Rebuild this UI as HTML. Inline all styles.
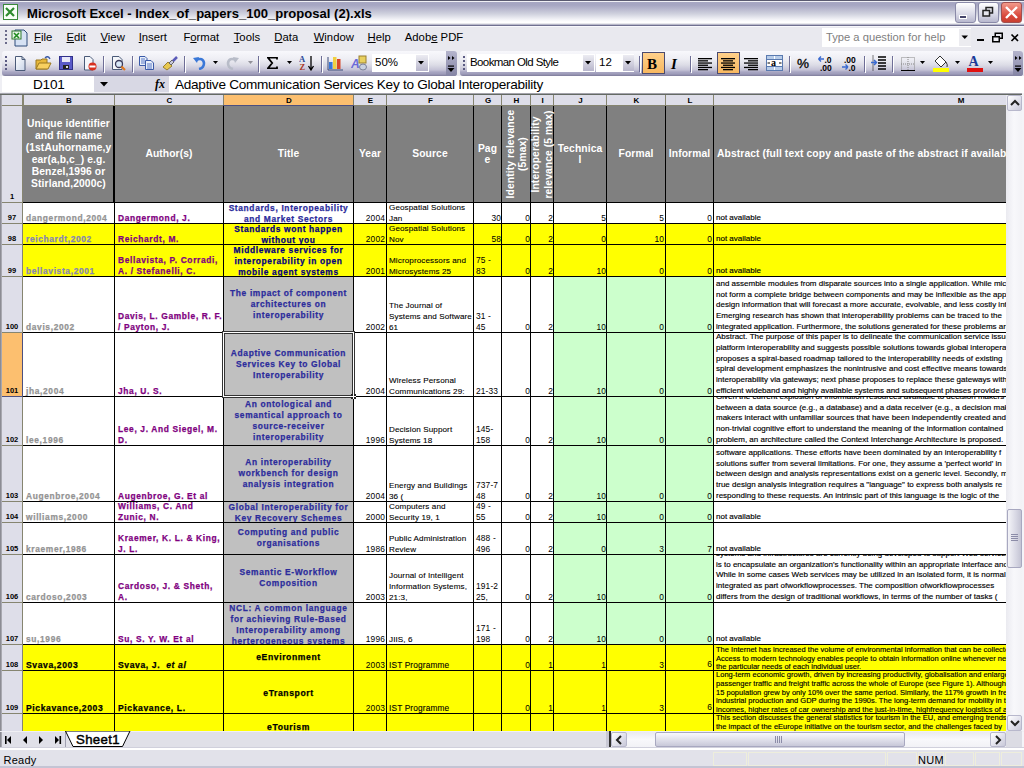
<!DOCTYPE html><html><head><meta charset="utf-8"><style>
html,body{margin:0;padding:0;}
body{width:1024px;height:768px;position:relative;overflow:hidden;background:#E9E9EF;font-family:"Liberation Sans",sans-serif;}
div{box-sizing:border-box;}
</style></head><body>

<div style="position:absolute;left:0px;top:0px;width:1024px;height:26px;background:linear-gradient(to bottom,#5A5A70 0px,#5A5A70 1px,#F0F0F5 1px,#F0F0F5 2px,#A6A6C2 2px,#A6A6C2 5px,#B8B8CE 9px,#D0D2DE 14px,#F0F0F5 19px,#FFFFFF 22px,#FFFFFF 23px,#E8E8EC 23px,#E8E8EC 24px,#B8B8CA 24px,#B8B8CA 25px,#707090 25px,#707090 26px);"></div>
<div style="position:absolute;left:3px;top:4px;width:15px;height:16px;background:#F4FBF2;border:1px solid #3C8A3C;"></div>
<svg style="position:absolute;left:3px;top:4px" width="15" height="16"><rect x="0.5" y="0.5" width="14" height="15" fill="#F8FFF8" stroke="#3A8A3A"/><path d="M3 4 L7 8 L3 12 M11 4 L7 8 L11 12" stroke="#2E8B2E" stroke-width="2.2" fill="none"/></svg>
<div style="position:absolute;top:4px;font-size:13.07px;line-height:20px;color:#000;font-weight:bold;white-space:pre;left:27px;">Microsoft Excel - Index_of_papers_100_proposal (2).xls</div>
<div style="position:absolute;left:955px;top:2px;width:21px;height:21px;background:linear-gradient(to bottom,#FFFFFF,#D8D8E6 60%,#B8B8CE);border:1px solid #8A8AA8;border-radius:3px;"></div>
<div style="position:absolute;left:978px;top:2px;width:21px;height:21px;background:linear-gradient(to bottom,#FFFFFF,#D8D8E6 60%,#B8B8CE);border:1px solid #8A8AA8;border-radius:3px;"></div>
<div style="position:absolute;left:1001px;top:2px;width:21px;height:21px;background:linear-gradient(to bottom,#F29A8A,#D8463A 70%,#C84030);border:1px solid #A05050;border-radius:3px;"></div>
<svg style="position:absolute;left:955px;top:2px" width="21" height="21"><rect x="4.5" y="13.5" width="7" height="3" fill="#44446A" stroke="#fff" stroke-width="1"/></svg>
<svg style="position:absolute;left:978px;top:2px" width="21" height="21"><rect x="8" y="5.5" width="6.5" height="5.5" fill="none" stroke="#222" stroke-width="1.5"/><rect x="5" y="8.5" width="6.5" height="5.5" fill="#E6E6EE" stroke="#222" stroke-width="1.5"/></svg>
<svg style="position:absolute;left:1001px;top:2px" width="21" height="21"><path d="M5 5 L16 16 M16 5 L5 16" stroke="#fff" stroke-width="2.4"/></svg>
<div style="position:absolute;left:0px;top:26px;width:1024px;height:25px;background:#E9E9EF;"></div>
<div style="position:absolute;left:0px;top:26px;width:1024px;height:1px;background:#F8F8FC;"></div>
<div style="position:absolute;left:5px;top:30px;width:2px;height:2px;background:#6A6A8A;"></div>
<div style="position:absolute;left:5px;top:34px;width:2px;height:2px;background:#6A6A8A;"></div>
<div style="position:absolute;left:5px;top:38px;width:2px;height:2px;background:#6A6A8A;"></div>
<div style="position:absolute;left:5px;top:42px;width:2px;height:2px;background:#6A6A8A;"></div>
<svg style="position:absolute;left:10px;top:28px" width="20" height="20"><path d="M5 2 H14 L17 5 V18 H5 Z" fill="#D6E2F4" stroke="#2E4C7A"/><rect x="2" y="3" width="9" height="8" fill="#E8F5E8" stroke="#2E7A2E"/><path d="M4 5 L9 10 M9 5 L4 10" stroke="#1E8B1E" stroke-width="1.6"/></svg>
<div style="position:absolute;left:34.0px;top:30px;font-size:11.3px;line-height:14px;color:#000;white-space:pre;"><span style="text-decoration:underline;text-underline-offset:1px;">F</span>ile</div>
<div style="position:absolute;left:66.5px;top:30px;font-size:11.3px;line-height:14px;color:#000;white-space:pre;"><span style="text-decoration:underline;text-underline-offset:1px;">E</span>dit</div>
<div style="position:absolute;left:100.5px;top:30px;font-size:11.3px;line-height:14px;color:#000;white-space:pre;"><span style="text-decoration:underline;text-underline-offset:1px;">V</span>iew</div>
<div style="position:absolute;left:138.7px;top:30px;font-size:11.3px;line-height:14px;color:#000;white-space:pre;"><span style="text-decoration:underline;text-underline-offset:1px;">I</span>nsert</div>
<div style="position:absolute;left:183.4px;top:30px;font-size:11.3px;line-height:14px;color:#000;white-space:pre;">F<span style="text-decoration:underline;text-underline-offset:1px;">o</span>rmat</div>
<div style="position:absolute;left:233.7px;top:30px;font-size:11.3px;line-height:14px;color:#000;white-space:pre;"><span style="text-decoration:underline;text-underline-offset:1px;">T</span>ools</div>
<div style="position:absolute;left:274.3px;top:30px;font-size:11.3px;line-height:14px;color:#000;white-space:pre;"><span style="text-decoration:underline;text-underline-offset:1px;">D</span>ata</div>
<div style="position:absolute;left:313.7px;top:30px;font-size:11.3px;line-height:14px;color:#000;white-space:pre;"><span style="text-decoration:underline;text-underline-offset:1px;">W</span>indow</div>
<div style="position:absolute;left:367.5px;top:30px;font-size:11.3px;line-height:14px;color:#000;white-space:pre;"><span style="text-decoration:underline;text-underline-offset:1px;">H</span>elp</div>
<div style="position:absolute;left:404.8px;top:30px;font-size:11.3px;line-height:14px;color:#000;white-space:pre;">Adob<span style="text-decoration:underline;text-underline-offset:1px;">e</span> PDF</div>
<div style="position:absolute;left:822px;top:28px;width:149px;height:19px;background:#FFFFFF;"></div>
<div style="position:absolute;left:959px;top:29px;width:12px;height:17px;background:#ECECF0;"></div>
<div style="position:absolute;top:27px;font-size:11.2px;line-height:20px;color:#808080;font-weight:normal;white-space:pre;left:826px;">Type a question for help</div>
<svg style="position:absolute;left:961px;top:35px" width="8" height="5" viewBox="0 0 8 5"><path d="M0.5 0.5 H7 L3.75 4 Z" fill="#000"/></svg>
<svg style="position:absolute;left:976px;top:38px" width="9" height="4" viewBox="0 0 9 4"><rect x="1" y="1" width="7" height="2" fill="#000"/></svg>
<svg style="position:absolute;left:991px;top:32px" width="13" height="11" viewBox="0 0 13 11"><rect x="4.25" y="1.25" width="7" height="5" fill="none" stroke="#000" stroke-width="1.5"/><rect x="1.75" y="4.75" width="6.5" height="5" fill="#EFEFF4" stroke="#000" stroke-width="1.5"/></svg>
<svg style="position:absolute;left:1010px;top:33px" width="10" height="10" viewBox="0 0 10 10"><path d="M1.5 1.5 L8 8 M8 1.5 L1.5 8" stroke="#000" stroke-width="1.7"/></svg>
<div style="position:absolute;left:2px;top:51px;width:455px;height:25px;background:linear-gradient(to bottom,#F8F8FC 0px,#EEEEF4 8px,#DCDCE6 14px,#C4C2D6 19px,#A8A6C2 21px,#9E9CBA 23px,#7E7C9A 25px);border-radius:3px;"></div>
<div style="position:absolute;left:446px;top:51px;width:11px;height:25px;background:linear-gradient(to bottom,#B4B4CC,#8484A4);border-radius:0 3px 3px 0;"></div>
<div style="position:absolute;left:460px;top:51px;width:563px;height:25px;background:linear-gradient(to bottom,#F8F8FC 0px,#EEEEF4 8px,#DCDCE6 14px,#C4C2D6 19px,#A8A6C2 21px,#9E9CBA 23px,#7E7C9A 25px);border-radius:3px;"></div>
<div style="position:absolute;left:1013px;top:51px;width:10px;height:25px;background:linear-gradient(to bottom,#B4B4CC,#8484A4);border-radius:0 3px 3px 0;"></div>
<div style="position:absolute;left:5px;top:56px;width:2px;height:2px;background:#5A5A82;"></div>
<div style="position:absolute;left:463px;top:56px;width:2px;height:2px;background:#5A5A82;"></div>
<div style="position:absolute;left:5px;top:60px;width:2px;height:2px;background:#5A5A82;"></div>
<div style="position:absolute;left:463px;top:60px;width:2px;height:2px;background:#5A5A82;"></div>
<div style="position:absolute;left:5px;top:64px;width:2px;height:2px;background:#5A5A82;"></div>
<div style="position:absolute;left:463px;top:64px;width:2px;height:2px;background:#5A5A82;"></div>
<div style="position:absolute;left:5px;top:68px;width:2px;height:2px;background:#5A5A82;"></div>
<div style="position:absolute;left:463px;top:68px;width:2px;height:2px;background:#5A5A82;"></div>
<svg style="position:absolute;left:14px;top:56px" width="12" height="15" viewBox="0 0 12 15"><path d="M1.5 0.5 H8 L11 3.5 V14.5 H1.5 Z" fill="url(#gw)" stroke="#4A5A78"/><path d="M8 0.5 V3.5 H11" fill="none" stroke="#4A5A78"/><defs><linearGradient id="gw" x1="0" y1="0" x2="1" y2="1"><stop offset="0" stop-color="#fff"/><stop offset="1" stop-color="#C8D4E8"/></linearGradient></defs></svg>
<svg style="position:absolute;left:35px;top:55px" width="17" height="16" viewBox="0 0 17 16"><path d="M1 5 H6 L7 4 H12 V14 H1 Z" fill="#E8B83A" stroke="#9A7820"/><path d="M1 14 L4 8 H16 L13 14 Z" fill="#F8D060" stroke="#9A7820"/><path d="M10 3 Q13 0 15 4" fill="none" stroke="#3A5AA8" stroke-width="1.4"/></svg>
<svg style="position:absolute;left:59px;top:56px" width="14" height="14" viewBox="0 0 14 14"><rect x="0.5" y="0.5" width="13" height="13" fill="#5A5AC8" stroke="#30308A"/><rect x="3" y="1" width="8" height="5" fill="#E8E8F8"/><rect x="4" y="9" width="6" height="4" fill="#222"/><rect x="7" y="10" width="2" height="2" fill="#ddd"/></svg>
<svg style="position:absolute;left:83px;top:56px" width="14" height="15" viewBox="0 0 14 15"><path d="M1.5 0.5 H7 L10 3.5 V14 H1.5 Z" fill="#F4F6FA" stroke="#4A5A78"/><circle cx="9.5" cy="10.5" r="4" fill="#D83020"/><rect x="6.5" y="9.5" width="6" height="2" fill="#fff"/></svg>
<div style="position:absolute;left:103px;top:56px;width:1px;height:16px;background:#6E6E96;"></div>
<div style="position:absolute;left:104px;top:57px;width:1px;height:16px;background:#FFFFFF;"></div>
<svg style="position:absolute;left:111px;top:56px" width="16" height="15" viewBox="0 0 16 15"><path d="M1.5 0.5 H8 L11 3.5 V13.5 H1.5 Z" fill="#F4F6FA" stroke="#4A5A78"/><circle cx="8" cy="8" r="3.5" fill="#D8E8F8" stroke="#3A3A5A" stroke-width="1.3"/><path d="M10.5 10.5 L14 14" stroke="#E07820" stroke-width="2.2"/></svg>
<div style="position:absolute;left:132px;top:56px;width:1px;height:16px;background:#6E6E96;"></div>
<div style="position:absolute;left:133px;top:57px;width:1px;height:16px;background:#FFFFFF;"></div>
<svg style="position:absolute;left:139px;top:56px" width="16" height="14" viewBox="0 0 16 14"><path d="M0.5 0.5 H6 L8 2.5 V9.5 H0.5 Z" fill="#E8EEF8" stroke="#3A5AA8"/><path d="M6.5 4.5 H12 L14.5 7 V13.5 H6.5 Z" fill="#E8EEF8" stroke="#3A5AA8"/><path d="M8 8 H13 M8 10 H13 M8 12 H13 M2 3 H6 M2 5 H6 M2 7 H6" stroke="#5A7AC8"/></svg>
<svg style="position:absolute;left:162px;top:55px" width="17" height="16" viewBox="0 0 17 16"><path d="M1 12 L6 7 L10 11 L5 15 Z" fill="#E8C850" stroke="#9A8030"/><path d="M7 8 L10 5 L12 7 L9 10 Z" fill="#C8C8D8" stroke="#666"/><path d="M11 6 L15 2" stroke="#5A5AB8" stroke-width="2.5"/></svg>
<div style="position:absolute;left:184px;top:56px;width:1px;height:16px;background:#6E6E96;"></div>
<div style="position:absolute;left:185px;top:57px;width:1px;height:16px;background:#FFFFFF;"></div>
<svg style="position:absolute;left:193px;top:56px" width="13" height="14" viewBox="0 0 13 14"><path d="M3 4 Q10 1 11 7 Q11 12 6 13" fill="none" stroke="#3A78D8" stroke-width="2.6"/><path d="M0 2 L6 1 L4 7 Z" fill="#3A78D8"/></svg>
<svg style="position:absolute;left:213px;top:61px" width="6" height="4" viewBox="0 0 6 4"><path d="M0 0 H5 L2.5 3 Z" fill="#000"/></svg>
<svg style="position:absolute;left:226px;top:56px" width="13" height="14" viewBox="0 0 13 14"><path d="M10 4 Q3 1 2 7 Q2 12 7 13" fill="none" stroke="#B8BCC8" stroke-width="2.6"/><path d="M13 2 L7 1 L9 7 Z" fill="#B8BCC8"/></svg>
<svg style="position:absolute;left:248px;top:61px" width="6" height="4" viewBox="0 0 6 4"><path d="M0 0 H5 L2.5 3 Z" fill="#909098"/></svg>
<div style="position:absolute;left:258px;top:56px;width:1px;height:16px;background:#6E6E96;"></div>
<div style="position:absolute;left:259px;top:57px;width:1px;height:16px;background:#FFFFFF;"></div>
<svg style="position:absolute;left:267px;top:57px" width="11" height="12" viewBox="0 0 11 12"><path d="M10 2.5 V0.5 H0.8 L5.2 6 L0.8 11.5 H10 V9.5" fill="none" stroke="#000" stroke-width="1.8"/></svg>
<svg style="position:absolute;left:287px;top:61px" width="6" height="4" viewBox="0 0 6 4"><path d="M0 0 H5 L2.5 3 Z" fill="#000"/></svg>
<svg style="position:absolute;left:299px;top:55px" width="16" height="16" viewBox="0 0 16 16"><text x="0" y="7" font-family="Liberation Serif" font-weight="bold" font-size="8.5" fill="#2A4A98">A</text><text x="0.5" y="15" font-family="Liberation Serif" font-weight="bold" font-size="8.5" fill="#A83828">Z</text><path d="M12 1 V14 M9.5 11 L12 15 L14.5 11" stroke="#000" stroke-width="1.3" fill="none"/></svg>
<div style="position:absolute;left:321px;top:56px;width:1px;height:16px;background:#6E6E96;"></div>
<div style="position:absolute;left:322px;top:57px;width:1px;height:16px;background:#FFFFFF;"></div>
<svg style="position:absolute;left:327px;top:55px" width="17" height="16" viewBox="0 0 17 16"><path d="M1 15 H16" stroke="#3A4A78"/><rect x="2" y="7" width="3.5" height="7" fill="#3A78D8"/><rect x="6" y="2" width="3.5" height="12" fill="#F0D040"/><rect x="10" y="4" width="3.5" height="10" fill="#D84828"/><path d="M1 2 V15" stroke="#3A4A78"/></svg>
<svg style="position:absolute;left:351px;top:55px" width="16" height="16" viewBox="0 0 16 16"><rect x="8" y="1" width="7" height="7" fill="#E8D060" stroke="#9A8030"/><text x="0" y="13" font-family="Liberation Sans" font-weight="bold" font-style="italic" font-size="12" fill="#6A6AD8">A</text><ellipse cx="12" cy="12" rx="3.5" ry="3" fill="#C8D0E0" stroke="#7A8098"/></svg>
<div style="position:absolute;left:372px;top:54px;width:57px;height:18px;background:#fff;"></div>
<div style="position:absolute;left:416px;top:55px;width:12px;height:16px;background:linear-gradient(#ECECF2,#B8B6CC);"></div>
<svg style="position:absolute;left:418px;top:61px" width="7" height="4" viewBox="0 0 7 4"><path d="M0 0 H6 L3 3.5 Z" fill="#000"/></svg>
<div style="position:absolute;top:52px;font-size:11.5px;line-height:20px;color:#000;font-weight:normal;white-space:pre;left:375px;">50%</div>
<svg style="position:absolute;left:447px;top:55px" width="9" height="18" viewBox="0 0 9 18"><path d="M1 1 L3.5 3 L1 5 Z M5 1 L7.5 3 L5 5 Z" fill="#000"/><rect x="1" y="10.5" width="6" height="1.2" fill="#000"/><path d="M0.5 13 H7.5 L4 17 Z" fill="#000"/></svg>
<svg style="position:absolute;left:1014px;top:55px" width="9" height="18" viewBox="0 0 9 18"><path d="M1 1 L3.5 3 L1 5 Z M5 1 L7.5 3 L5 5 Z" fill="#000"/><rect x="1" y="10.5" width="6" height="1.2" fill="#000"/><path d="M0.5 13 H7.5 L4 17 Z" fill="#000"/></svg>
<div style="position:absolute;left:467px;top:54px;width:128px;height:18px;background:#fff;"></div>
<div style="position:absolute;left:583px;top:55px;width:11px;height:16px;background:linear-gradient(#ECECF2,#B8B6CC);"></div>
<svg style="position:absolute;left:585px;top:61px" width="7" height="4" viewBox="0 0 7 4"><path d="M0 0 H6 L3 3.5 Z" fill="#000"/></svg>
<div style="position:absolute;top:52px;font-size:11.5px;line-height:20px;color:#000;font-weight:normal;white-space:pre;letter-spacing:-0.6px;left:470px;">Bookman Old Style</div>
<div style="position:absolute;left:596px;top:54px;width:38px;height:18px;background:#fff;"></div>
<div style="position:absolute;left:623px;top:55px;width:11px;height:16px;background:linear-gradient(#ECECF2,#B8B6CC);"></div>
<svg style="position:absolute;left:625px;top:61px" width="7" height="4" viewBox="0 0 7 4"><path d="M0 0 H6 L3 3.5 Z" fill="#000"/></svg>
<div style="position:absolute;top:52px;font-size:11.5px;line-height:20px;color:#000;font-weight:normal;white-space:pre;left:599px;">12</div>
<div style="position:absolute;left:639px;top:56px;width:1px;height:16px;background:#6E6E96;"></div>
<div style="position:absolute;left:640px;top:57px;width:1px;height:16px;background:#FFFFFF;"></div>
<div style="position:absolute;left:642px;top:52px;width:23px;height:22px;background:linear-gradient(#FFD08A,#F8B860);border:1px solid #4B4B6F;"></div>
<div style="position:absolute;top:54px;font-size:15px;line-height:20px;color:#000;font-weight:bold;white-space:pre;left:647px;font-family:'Liberation Serif',serif;">B</div>
<div style="position:absolute;top:54px;font-size:15px;line-height:20px;color:#000;font-weight:bold;white-space:pre;left:671px;font-family:'Liberation Serif',serif;font-style:italic;">I</div>
<div style="position:absolute;left:690px;top:56px;width:1px;height:16px;background:#6E6E96;"></div>
<div style="position:absolute;left:691px;top:57px;width:1px;height:16px;background:#FFFFFF;"></div>
<svg style="position:absolute;left:698px;top:58px" width="15" height="13" viewBox="0 0 15 13"><rect x="0" y="0.0" width="14" height="1.3" fill="#000"/><rect x="0" y="2.2" width="10" height="1.3" fill="#000"/><rect x="0" y="4.4" width="14" height="1.3" fill="#000"/><rect x="0" y="6.6" width="10" height="1.3" fill="#000"/><rect x="0" y="8.8" width="14" height="1.3" fill="#000"/><rect x="0" y="11.0" width="10" height="1.3" fill="#000"/></svg>
<div style="position:absolute;left:717px;top:52px;width:23px;height:22px;background:linear-gradient(#FFD08A,#F8B860);border:1px solid #4B4B6F;"></div>
<svg style="position:absolute;left:721px;top:58px" width="15" height="13" viewBox="0 0 15 13"><rect x="0.0" y="0.0" width="14" height="1.3" fill="#000"/><rect x="2.0" y="2.2" width="10" height="1.3" fill="#000"/><rect x="0.0" y="4.4" width="14" height="1.3" fill="#000"/><rect x="2.0" y="6.6" width="10" height="1.3" fill="#000"/><rect x="0.0" y="8.8" width="14" height="1.3" fill="#000"/><rect x="2.0" y="11.0" width="10" height="1.3" fill="#000"/></svg>
<svg style="position:absolute;left:744px;top:58px" width="15" height="13" viewBox="0 0 15 13"><rect x="0" y="0.0" width="14" height="1.3" fill="#000"/><rect x="4" y="2.2" width="10" height="1.3" fill="#000"/><rect x="0" y="4.4" width="14" height="1.3" fill="#000"/><rect x="4" y="6.6" width="10" height="1.3" fill="#000"/><rect x="0" y="8.8" width="14" height="1.3" fill="#000"/><rect x="4" y="11.0" width="10" height="1.3" fill="#000"/></svg>
<svg style="position:absolute;left:766px;top:55px" width="17" height="16" viewBox="0 0 17 16"><rect x="0.5" y="0.5" width="16" height="15" fill="#B8CCE8" stroke="#5A7AB0"/><path d="M8.5 1 V5 M8.5 11 V15" stroke="#fff"/><rect x="1" y="5" width="15" height="6" fill="#fff"/><path d="M1 4.5 H16 M1 11.5 H16" stroke="#5A7AB0"/><text x="5" y="10.5" font-family="Liberation Serif" font-weight="bold" font-size="10" fill="#000">a</text><path d="M1.5 8 H4 M15.5 8 H13" stroke="#000"/></svg>
<div style="position:absolute;left:789px;top:56px;width:1px;height:16px;background:#6E6E96;"></div>
<div style="position:absolute;left:790px;top:57px;width:1px;height:16px;background:#FFFFFF;"></div>
<div style="position:absolute;top:54px;font-size:13.5px;line-height:20px;color:#000;font-weight:normal;white-space:pre;left:797px;-webkit-text-stroke:0.3px #000;">%</div>
<svg style="position:absolute;left:817px;top:55px" width="18" height="16" viewBox="0 0 18 16"><path d="M1.5 4 H7 M1.5 4 L4 1.5 M1.5 4 L4 6.5" stroke="#3A6AD0" stroke-width="1.4" fill="none"/><text x="7.5" y="8" font-family="Liberation Sans" font-weight="bold" font-size="8.5" fill="#000">.0</text><text x="3" y="15.5" font-family="Liberation Sans" font-weight="bold" font-size="8.5" fill="#000">.00</text></svg>
<svg style="position:absolute;left:841px;top:55px" width="18" height="16" viewBox="0 0 18 16"><text x="3" y="8" font-family="Liberation Sans" font-weight="bold" font-size="8.5" fill="#000">.00</text><path d="M1 12 H7 M7 12 L4.5 9.5 M7 12 L4.5 14.5" stroke="#3A6AD0" stroke-width="1.4" fill="none"/><text x="7.5" y="15.5" font-family="Liberation Sans" font-weight="bold" font-size="8.5" fill="#000">.0</text></svg>
<div style="position:absolute;left:864px;top:56px;width:1px;height:16px;background:#6E6E96;"></div>
<div style="position:absolute;left:865px;top:57px;width:1px;height:16px;background:#FFFFFF;"></div>
<svg style="position:absolute;left:870px;top:55px" width="17" height="16" viewBox="0 0 17 16"><path d="M8 2 H16 M8 5 H16 M8 8 H16 M8 11 H16 M8 14 H16" stroke="#000" stroke-width="1.4"/><path d="M3 0.5 V16" stroke="#000" stroke-dasharray="1,1"/><path d="M1 7.5 H6 M4 5 L6.5 7.5 L4 10" stroke="#3A6AD0" stroke-width="1.5" fill="none"/></svg>
<div style="position:absolute;left:892px;top:56px;width:1px;height:16px;background:#6E6E96;"></div>
<div style="position:absolute;left:893px;top:57px;width:1px;height:16px;background:#FFFFFF;"></div>
<svg style="position:absolute;left:901px;top:57px" width="14" height="14" viewBox="0 0 14 14"><rect x="0.5" y="0.5" width="13" height="13" fill="none" stroke="#888" stroke-dasharray="1,1"/><path d="M7 0 V14 M0 7 H14" stroke="#888" stroke-dasharray="1,1"/><path d="M0 13.5 H14" stroke="#000"/></svg>
<svg style="position:absolute;left:920px;top:61px" width="6" height="4" viewBox="0 0 6 4"><path d="M0 0 H5 L2.5 3 Z" fill="#000"/></svg>
<svg style="position:absolute;left:932px;top:55px" width="18" height="17" viewBox="0 0 18 17"><path d="M3 6 L8 1 L14 7 L9 12 Z" fill="#fff" stroke="#333"/><path d="M14 7 Q16 10 15 12" stroke="#333" fill="none"/><rect x="1" y="13" width="16" height="4" fill="#FFFF00"/></svg>
<svg style="position:absolute;left:955px;top:61px" width="6" height="4" viewBox="0 0 6 4"><path d="M0 0 H5 L2.5 3 Z" fill="#000"/></svg>
<svg style="position:absolute;left:967px;top:55px" width="16" height="17" viewBox="0 0 16 17"><text x="1.5" y="11" font-family="Liberation Serif" font-weight="bold" font-size="14" fill="#1A3A98">A</text><rect x="0" y="13" width="16" height="4" fill="#E01010"/></svg>
<svg style="position:absolute;left:988px;top:61px" width="6" height="4" viewBox="0 0 6 4"><path d="M0 0 H5 L2.5 3 Z" fill="#000"/></svg>
<div style="position:absolute;left:0px;top:76px;width:1024px;height:17px;background:#EFEFF4;"></div>
<div style="position:absolute;left:2px;top:76px;width:92px;height:16px;background:#fff;"></div>
<div style="position:absolute;left:94px;top:76px;width:20px;height:16px;background:#D8D8E4;"></div>
<svg style="position:absolute;left:100px;top:82px" width="9" height="5" viewBox="0 0 9 5"><path d="M0 0 H8 L4 4.5 Z" fill="#000"/></svg>
<div style="position:absolute;top:75px;font-size:13.6px;line-height:20px;color:#000;font-weight:normal;white-space:pre;letter-spacing:-0.2px;left:33px;">D101</div>
<div style="position:absolute;left:114px;top:76px;width:55px;height:16px;background:#D8D8E4;"></div>
<div style="position:absolute;top:74px;font-size:12px;line-height:20px;color:#000;font-weight:bold;white-space:pre;left:155px;font-family:'Liberation Serif',serif;font-style:italic;">fx</div>
<div style="position:absolute;left:169px;top:76px;width:855px;height:17px;background:#fff;"></div>
<div style="position:absolute;top:75px;font-size:13.6px;line-height:20px;color:#000;font-weight:normal;white-space:pre;letter-spacing:-0.28px;left:175px;">Adaptive Communication Services Key to Global Interoperability</div>
<div style="position:absolute;left:0px;top:93px;width:1024px;height:1px;background:#A4A4AC;"></div>
<div style="position:absolute;left:0px;top:94px;width:1006px;height:637px;background:#fff;"></div>
<div style="position:absolute;left:0px;top:94px;width:2px;height:653px;background:#8C8C94;"></div>
<div style="position:absolute;left:1px;top:94px;width:1px;height:653px;background:#A8A8B0;"></div>
<div style="position:absolute;left:0px;top:94px;width:1022px;height:1px;background:#646A64;"></div>
<div style="position:absolute;left:2px;top:95px;width:1004px;height:10px;background:#DEDEE9;"></div>
<div style="position:absolute;left:2px;top:105px;width:1004px;height:1px;background:#868570;"></div>
<div style="position:absolute;left:22px;top:95px;width:1px;height:11px;background:#868570;"></div>
<div style="position:absolute;left:114px;top:95px;width:1px;height:11px;background:#868570;"></div>
<div style="position:absolute;left:223px;top:95px;width:1px;height:11px;background:#868570;"></div>
<div style="position:absolute;left:353px;top:95px;width:1px;height:11px;background:#868570;"></div>
<div style="position:absolute;left:386px;top:95px;width:1px;height:11px;background:#868570;"></div>
<div style="position:absolute;left:473px;top:95px;width:1px;height:11px;background:#868570;"></div>
<div style="position:absolute;left:501px;top:95px;width:1px;height:11px;background:#868570;"></div>
<div style="position:absolute;left:530px;top:95px;width:1px;height:11px;background:#868570;"></div>
<div style="position:absolute;left:553px;top:95px;width:1px;height:11px;background:#868570;"></div>
<div style="position:absolute;left:606px;top:95px;width:1px;height:11px;background:#868570;"></div>
<div style="position:absolute;left:665px;top:95px;width:1px;height:11px;background:#868570;"></div>
<div style="position:absolute;left:713px;top:95px;width:1px;height:11px;background:#868570;"></div>
<div style="position:absolute;left:23px;top:95px;width:1px;height:10px;background:#868570;"></div>
<div style="position:absolute;left:224px;top:95px;width:129px;height:10px;background:#FCBF6F;"></div>
<div style="position:absolute;left:223px;top:105px;width:131px;height:1px;background:#4C5080;"></div>
<div style="position:absolute;left:49.0px;top:96px;width:40px;text-align:center;font-size:8px;line-height:9px;font-weight:bold;color:#000;">B</div>
<div style="position:absolute;left:149.5px;top:96px;width:40px;text-align:center;font-size:8px;line-height:9px;font-weight:bold;color:#000;">C</div>
<div style="position:absolute;left:269.0px;top:96px;width:40px;text-align:center;font-size:8px;line-height:9px;font-weight:bold;color:#000;">D</div>
<div style="position:absolute;left:350.5px;top:96px;width:40px;text-align:center;font-size:8px;line-height:9px;font-weight:bold;color:#000;">E</div>
<div style="position:absolute;left:410.5px;top:96px;width:40px;text-align:center;font-size:8px;line-height:9px;font-weight:bold;color:#000;">F</div>
<div style="position:absolute;left:468.0px;top:96px;width:40px;text-align:center;font-size:8px;line-height:9px;font-weight:bold;color:#000;">G</div>
<div style="position:absolute;left:496.5px;top:96px;width:40px;text-align:center;font-size:8px;line-height:9px;font-weight:bold;color:#000;">H</div>
<div style="position:absolute;left:522.5px;top:96px;width:40px;text-align:center;font-size:8px;line-height:9px;font-weight:bold;color:#000;">I</div>
<div style="position:absolute;left:560.5px;top:96px;width:40px;text-align:center;font-size:8px;line-height:9px;font-weight:bold;color:#000;">J</div>
<div style="position:absolute;left:616.5px;top:96px;width:40px;text-align:center;font-size:8px;line-height:9px;font-weight:bold;color:#000;">K</div>
<div style="position:absolute;left:670.0px;top:96px;width:40px;text-align:center;font-size:8px;line-height:9px;font-weight:bold;color:#000;">L</div>
<div style="position:absolute;left:941.0px;top:96px;width:40px;text-align:center;font-size:8px;line-height:9px;font-weight:bold;color:#000;">M</div>
<div style="position:absolute;left:2px;top:106px;width:20px;height:625px;background:#DEDEE9;"></div>
<div style="position:absolute;left:22px;top:106px;width:1px;height:625px;background:#868570;"></div>
<div style="position:absolute;left:2px;top:202px;width:20px;height:1px;background:#868570;"></div>
<div style="position:absolute;left:2px;top:192px;width:20px;text-align:center;font-size:7.5px;line-height:9px;font-weight:bold;color:#000;">1</div>
<div style="position:absolute;left:2px;top:223px;width:20px;height:1px;background:#868570;"></div>
<div style="position:absolute;left:2px;top:213px;width:20px;text-align:center;font-size:7.5px;line-height:9px;font-weight:bold;color:#000;">97</div>
<div style="position:absolute;left:2px;top:244px;width:20px;height:1px;background:#868570;"></div>
<div style="position:absolute;left:2px;top:234px;width:20px;text-align:center;font-size:7.5px;line-height:9px;font-weight:bold;color:#000;">98</div>
<div style="position:absolute;left:2px;top:276px;width:20px;height:1px;background:#868570;"></div>
<div style="position:absolute;left:2px;top:266px;width:20px;text-align:center;font-size:7.5px;line-height:9px;font-weight:bold;color:#000;">99</div>
<div style="position:absolute;left:2px;top:332px;width:20px;height:1px;background:#868570;"></div>
<div style="position:absolute;left:2px;top:322px;width:20px;text-align:center;font-size:7.5px;line-height:9px;font-weight:bold;color:#000;">100</div>
<div style="position:absolute;left:2px;top:396px;width:20px;height:1px;background:#868570;"></div>
<div style="position:absolute;left:2px;top:333px;width:20px;height:63px;background:#FCBF6F;"></div>
<div style="position:absolute;left:22px;top:333px;width:1px;height:64px;background:#4C5080;"></div>
<div style="position:absolute;left:2px;top:396px;width:21px;height:1px;background:#4C5080;"></div>
<div style="position:absolute;left:2px;top:386px;width:20px;text-align:center;font-size:7.5px;line-height:9px;font-weight:bold;color:#000;">101</div>
<div style="position:absolute;left:2px;top:445px;width:20px;height:1px;background:#868570;"></div>
<div style="position:absolute;left:2px;top:435px;width:20px;text-align:center;font-size:7.5px;line-height:9px;font-weight:bold;color:#000;">102</div>
<div style="position:absolute;left:2px;top:501px;width:20px;height:1px;background:#868570;"></div>
<div style="position:absolute;left:2px;top:491px;width:20px;text-align:center;font-size:7.5px;line-height:9px;font-weight:bold;color:#000;">103</div>
<div style="position:absolute;left:2px;top:522px;width:20px;height:1px;background:#868570;"></div>
<div style="position:absolute;left:2px;top:512px;width:20px;text-align:center;font-size:7.5px;line-height:9px;font-weight:bold;color:#000;">104</div>
<div style="position:absolute;left:2px;top:554px;width:20px;height:1px;background:#868570;"></div>
<div style="position:absolute;left:2px;top:544px;width:20px;text-align:center;font-size:7.5px;line-height:9px;font-weight:bold;color:#000;">105</div>
<div style="position:absolute;left:2px;top:602px;width:20px;height:1px;background:#868570;"></div>
<div style="position:absolute;left:2px;top:592px;width:20px;text-align:center;font-size:7.5px;line-height:9px;font-weight:bold;color:#000;">106</div>
<div style="position:absolute;left:2px;top:644px;width:20px;height:1px;background:#868570;"></div>
<div style="position:absolute;left:2px;top:634px;width:20px;text-align:center;font-size:7.5px;line-height:9px;font-weight:bold;color:#000;">107</div>
<div style="position:absolute;left:2px;top:670px;width:20px;height:1px;background:#868570;"></div>
<div style="position:absolute;left:2px;top:660px;width:20px;text-align:center;font-size:7.5px;line-height:9px;font-weight:bold;color:#000;">108</div>
<div style="position:absolute;left:2px;top:713px;width:20px;height:1px;background:#868570;"></div>
<div style="position:absolute;left:2px;top:703px;width:20px;text-align:center;font-size:7.5px;line-height:9px;font-weight:bold;color:#000;">109</div>
<div style="position:absolute;left:23px;top:106px;width:983px;height:96px;background:#808080;"></div>
<div style="position:absolute;left:23px;top:224px;width:983px;height:20px;background:#FFFF00;"></div>
<div style="position:absolute;left:23px;top:245px;width:983px;height:31px;background:#FFFF00;"></div>
<div style="position:absolute;left:224px;top:277px;width:129px;height:55px;background:#C0C0C0;"></div>
<div style="position:absolute;left:554px;top:277px;width:159px;height:55px;background:#CCFFCC;"></div>
<div style="position:absolute;left:224px;top:333px;width:129px;height:63px;background:#C0C0C0;"></div>
<div style="position:absolute;left:554px;top:333px;width:159px;height:63px;background:#CCFFCC;"></div>
<div style="position:absolute;left:224px;top:397px;width:129px;height:48px;background:#C0C0C0;"></div>
<div style="position:absolute;left:554px;top:397px;width:159px;height:48px;background:#CCFFCC;"></div>
<div style="position:absolute;left:224px;top:446px;width:129px;height:55px;background:#C0C0C0;"></div>
<div style="position:absolute;left:554px;top:446px;width:159px;height:55px;background:#CCFFCC;"></div>
<div style="position:absolute;left:224px;top:502px;width:129px;height:20px;background:#C0C0C0;"></div>
<div style="position:absolute;left:554px;top:502px;width:159px;height:20px;background:#CCFFCC;"></div>
<div style="position:absolute;left:224px;top:523px;width:129px;height:31px;background:#C0C0C0;"></div>
<div style="position:absolute;left:554px;top:523px;width:159px;height:31px;background:#CCFFCC;"></div>
<div style="position:absolute;left:224px;top:555px;width:129px;height:47px;background:#C0C0C0;"></div>
<div style="position:absolute;left:554px;top:555px;width:159px;height:47px;background:#CCFFCC;"></div>
<div style="position:absolute;left:224px;top:603px;width:129px;height:41px;background:#C0C0C0;"></div>
<div style="position:absolute;left:554px;top:603px;width:159px;height:41px;background:#CCFFCC;"></div>
<div style="position:absolute;left:23px;top:645px;width:983px;height:25px;background:#FFFF00;"></div>
<div style="position:absolute;left:23px;top:671px;width:983px;height:42px;background:#FFFF00;"></div>
<div style="position:absolute;left:23px;top:714px;width:983px;height:17px;background:#FFFF00;"></div>
<div style="position:absolute;left:23px;top:202px;width:983px;height:1px;background:#000;"></div>
<div style="position:absolute;left:23px;top:223px;width:983px;height:1px;background:#000;"></div>
<div style="position:absolute;left:23px;top:244px;width:983px;height:1px;background:#000;"></div>
<div style="position:absolute;left:23px;top:276px;width:983px;height:1px;background:#000;"></div>
<div style="position:absolute;left:23px;top:332px;width:983px;height:1px;background:#000;"></div>
<div style="position:absolute;left:23px;top:396px;width:983px;height:1px;background:#000;"></div>
<div style="position:absolute;left:23px;top:445px;width:983px;height:1px;background:#000;"></div>
<div style="position:absolute;left:23px;top:501px;width:983px;height:1px;background:#000;"></div>
<div style="position:absolute;left:23px;top:522px;width:983px;height:1px;background:#000;"></div>
<div style="position:absolute;left:23px;top:554px;width:983px;height:1px;background:#000;"></div>
<div style="position:absolute;left:23px;top:602px;width:983px;height:1px;background:#000;"></div>
<div style="position:absolute;left:23px;top:644px;width:983px;height:1px;background:#000;"></div>
<div style="position:absolute;left:23px;top:670px;width:983px;height:1px;background:#000;"></div>
<div style="position:absolute;left:23px;top:713px;width:983px;height:1px;background:#000;"></div>
<div style="position:absolute;left:114px;top:106px;width:1px;height:625px;background:#000;"></div>
<div style="position:absolute;left:223px;top:106px;width:1px;height:625px;background:#000;"></div>
<div style="position:absolute;left:353px;top:106px;width:1px;height:625px;background:#000;"></div>
<div style="position:absolute;left:386px;top:106px;width:1px;height:625px;background:#000;"></div>
<div style="position:absolute;left:473px;top:106px;width:1px;height:625px;background:#000;"></div>
<div style="position:absolute;left:501px;top:106px;width:1px;height:625px;background:#000;"></div>
<div style="position:absolute;left:530px;top:106px;width:1px;height:625px;background:#000;"></div>
<div style="position:absolute;left:553px;top:106px;width:1px;height:625px;background:#000;"></div>
<div style="position:absolute;left:606px;top:106px;width:1px;height:625px;background:#000;"></div>
<div style="position:absolute;left:665px;top:106px;width:1px;height:625px;background:#000;"></div>
<div style="position:absolute;left:713px;top:106px;width:1px;height:625px;background:#000;"></div>
<div style="position:absolute;left:113px;top:106px;width:1px;height:96px;background:#000;"></div>
<div style="position:absolute;left:23px;top:106px;width:91px;height:96px;overflow:hidden;color:#FFFFFF;font-weight:bold;font-size:10.3px;letter-spacing:0.1px;"><div style="position:absolute;top:8px;line-height:20px;white-space:pre;left:-50px;right:-50px;text-align:center;">Unique identifier</div><div style="position:absolute;top:20px;line-height:20px;white-space:pre;left:-50px;right:-50px;text-align:center;">and file name</div><div style="position:absolute;top:32px;line-height:20px;white-space:pre;left:-50px;right:-50px;text-align:center;">(1stAuhorname,y</div><div style="position:absolute;top:44px;line-height:20px;white-space:pre;left:-50px;right:-50px;text-align:center;">ear(a,b,c_) e.g.</div><div style="position:absolute;top:56px;line-height:20px;white-space:pre;left:-50px;right:-50px;text-align:center;">Benzel,1996 or</div><div style="position:absolute;top:68px;line-height:20px;white-space:pre;left:-50px;right:-50px;text-align:center;">Stirland,2000c)</div></div>
<div style="position:absolute;left:115px;top:106px;width:108px;height:96px;overflow:hidden;color:#FFFFFF;font-weight:bold;font-size:10.3px;letter-spacing:0.1px;"><div style="position:absolute;top:38px;line-height:20px;white-space:pre;left:-50px;right:-50px;text-align:center;">Author(s)</div></div>
<div style="position:absolute;left:224px;top:106px;width:129px;height:96px;overflow:hidden;color:#FFFFFF;font-weight:bold;font-size:10.3px;letter-spacing:0.1px;"><div style="position:absolute;top:38px;line-height:20px;white-space:pre;left:-50px;right:-50px;text-align:center;">Title</div></div>
<div style="position:absolute;left:354px;top:106px;width:32px;height:96px;overflow:hidden;color:#FFFFFF;font-weight:bold;font-size:10.3px;letter-spacing:0.1px;"><div style="position:absolute;top:38px;line-height:20px;white-space:pre;left:-50px;right:-50px;text-align:center;">Year</div></div>
<div style="position:absolute;left:387px;top:106px;width:86px;height:96px;overflow:hidden;color:#FFFFFF;font-weight:bold;font-size:10.3px;letter-spacing:0.1px;"><div style="position:absolute;top:38px;line-height:20px;white-space:pre;left:-50px;right:-50px;text-align:center;">Source</div></div>
<div style="position:absolute;left:474px;top:106px;width:27px;height:96px;overflow:hidden;color:#FFFFFF;font-weight:bold;font-size:10.3px;letter-spacing:0.1px;"><div style="position:absolute;top:33px;line-height:20px;white-space:pre;left:-50px;right:-50px;text-align:center;">Pag</div><div style="position:absolute;top:44px;line-height:20px;white-space:pre;left:-50px;right:-50px;text-align:center;">e</div></div>
<div style="position:absolute;left:554px;top:106px;width:52px;height:96px;overflow:hidden;color:#FFFFFF;font-weight:bold;font-size:10.3px;letter-spacing:0.1px;"><div style="position:absolute;top:33px;line-height:20px;white-space:pre;left:-50px;right:-50px;text-align:center;">Technica</div><div style="position:absolute;top:44px;line-height:20px;white-space:pre;left:-50px;right:-50px;text-align:center;">l</div></div>
<div style="position:absolute;left:607px;top:106px;width:58px;height:96px;overflow:hidden;color:#FFFFFF;font-weight:bold;font-size:10.3px;letter-spacing:0.1px;"><div style="position:absolute;top:38px;line-height:20px;white-space:pre;left:-50px;right:-50px;text-align:center;">Formal</div></div>
<div style="position:absolute;left:666px;top:106px;width:47px;height:96px;overflow:hidden;color:#FFFFFF;font-weight:bold;font-size:10.3px;letter-spacing:0.1px;"><div style="position:absolute;top:38px;line-height:20px;white-space:pre;left:-50px;right:-50px;text-align:center;">Informal</div></div>
<div style="position:absolute;left:714px;top:106px;width:292px;height:96px;overflow:hidden;color:#FFFFFF;font-weight:bold;font-size:10.3px;letter-spacing:0.1px;"><div style="position:absolute;top:38px;line-height:20px;white-space:pre;left:3px;">Abstract (full text copy and paste of the abstract if available)</div></div>
<div style="position:absolute;left:466.5px;top:142.0px;width:100px;height:24px;transform:rotate(-90deg);color:#FFFFFF;font-weight:bold;font-size:10.3px;letter-spacing:0.1px;"><div style="text-align:center;white-space:pre;height:12px;line-height:12px;">Identity relevance</div><div style="text-align:center;white-space:pre;height:12px;line-height:12px;">(5max)</div></div>
<div style="position:absolute;left:492.0px;top:141.5px;width:100px;height:25.0px;transform:rotate(-90deg);color:#FFFFFF;font-weight:bold;font-size:10.3px;letter-spacing:0.1px;"><div style="text-align:center;white-space:pre;height:12.5px;line-height:12.5px;">Interoperability</div><div style="text-align:center;white-space:pre;height:12.5px;line-height:12.5px;">relevance (5 max)</div></div>
<div style="position:absolute;left:23px;top:203px;width:91px;height:20px;overflow:hidden;color:#939393;font-weight:bold;font-size:8.4px;letter-spacing:0.65px;-webkit-text-stroke-width:0.25px;"><div style="position:absolute;top:5px;line-height:20px;white-space:pre;left:3px;">dangermond,2004</div></div>
<div style="position:absolute;left:115px;top:203px;width:108px;height:20px;overflow:hidden;color:#800080;font-weight:bold;font-size:8.4px;letter-spacing:0.65px;-webkit-text-stroke-width:0.25px;"><div style="position:absolute;top:5px;line-height:20px;white-space:pre;left:3px;">Dangermond, J.</div></div>
<div style="position:absolute;left:224px;top:203px;width:129px;height:20px;overflow:hidden;color:#2C2C9C;font-weight:bold;font-size:8.4px;letter-spacing:0.65px;-webkit-text-stroke-width:0.25px;"><div style="position:absolute;top:-5px;line-height:20px;white-space:pre;left:-50px;right:-50px;text-align:center;">Standards, Interopeability</div><div style="position:absolute;top:6px;line-height:20px;white-space:pre;left:-50px;right:-50px;text-align:center;">and Market Sectors</div></div>
<div style="position:absolute;left:354px;top:203px;width:32px;height:20px;overflow:hidden;color:#000;font-weight:normal;font-size:8.4px;letter-spacing:0.15px;"><div style="position:absolute;top:5px;line-height:20px;white-space:pre;right:1px;">2004</div></div>
<div style="position:absolute;left:387px;top:203px;width:86px;height:20px;overflow:hidden;color:#000;font-weight:normal;font-size:8.1px;letter-spacing:0.1px;-webkit-text-stroke:0.1px #000;"><div style="position:absolute;top:-5px;line-height:20px;white-space:pre;left:2px;">Geospatial Solutions</div><div style="position:absolute;top:6px;line-height:20px;white-space:pre;left:2px;">Jan</div></div>
<div style="position:absolute;left:474px;top:203px;width:27px;height:20px;overflow:hidden;color:#000;font-weight:normal;font-size:8.4px;letter-spacing:0.15px;"><div style="position:absolute;top:5px;line-height:20px;white-space:pre;right:0px;">30</div></div>
<div style="position:absolute;left:502px;top:203px;width:28px;height:20px;overflow:hidden;color:#000;font-weight:normal;font-size:8.4px;letter-spacing:0px;"><div style="position:absolute;top:5px;line-height:20px;white-space:pre;right:0px;">0</div></div>
<div style="position:absolute;left:531px;top:203px;width:22px;height:20px;overflow:hidden;color:#000;font-weight:normal;font-size:8.4px;letter-spacing:0px;"><div style="position:absolute;top:5px;line-height:20px;white-space:pre;right:0px;">2</div></div>
<div style="position:absolute;left:554px;top:203px;width:52px;height:20px;overflow:hidden;color:#000;font-weight:normal;font-size:8.4px;letter-spacing:0.15px;"><div style="position:absolute;top:5px;line-height:20px;white-space:pre;right:0px;">5</div></div>
<div style="position:absolute;left:607px;top:203px;width:58px;height:20px;overflow:hidden;color:#000;font-weight:normal;font-size:8.4px;letter-spacing:0.15px;"><div style="position:absolute;top:5px;line-height:20px;white-space:pre;right:1px;">5</div></div>
<div style="position:absolute;left:666px;top:203px;width:47px;height:20px;overflow:hidden;color:#000;font-weight:normal;font-size:8.4px;letter-spacing:0px;"><div style="position:absolute;top:5px;line-height:20px;white-space:pre;right:1px;">0</div></div>
<div style="position:absolute;left:714px;top:203px;width:292px;height:20px;overflow:hidden;color:#000;font-weight:normal;font-size:8.0px;letter-spacing:0.0px;-webkit-text-stroke:0.15px #000;"><div style="position:absolute;top:5px;line-height:20px;white-space:pre;left:2px;">not available</div></div>
<div style="position:absolute;left:23px;top:224px;width:91px;height:20px;overflow:hidden;color:#8686B4;font-weight:bold;font-size:8.4px;letter-spacing:0.65px;-webkit-text-stroke-width:0.25px;"><div style="position:absolute;top:5px;line-height:20px;white-space:pre;left:3px;">reichardt,2002</div></div>
<div style="position:absolute;left:115px;top:224px;width:108px;height:20px;overflow:hidden;color:#800080;font-weight:bold;font-size:8.4px;letter-spacing:0.65px;-webkit-text-stroke-width:0.25px;"><div style="position:absolute;top:5px;line-height:20px;white-space:pre;left:3px;">Reichardt, M.</div></div>
<div style="position:absolute;left:224px;top:224px;width:129px;height:20px;overflow:hidden;color:#000080;font-weight:bold;font-size:8.4px;letter-spacing:0.65px;-webkit-text-stroke-width:0.25px;"><div style="position:absolute;top:-5px;line-height:20px;white-space:pre;left:-50px;right:-50px;text-align:center;">Standards wont happen</div><div style="position:absolute;top:6px;line-height:20px;white-space:pre;left:-50px;right:-50px;text-align:center;">without you</div></div>
<div style="position:absolute;left:354px;top:224px;width:32px;height:20px;overflow:hidden;color:#000;font-weight:normal;font-size:8.4px;letter-spacing:0.15px;"><div style="position:absolute;top:5px;line-height:20px;white-space:pre;right:1px;">2002</div></div>
<div style="position:absolute;left:387px;top:224px;width:86px;height:20px;overflow:hidden;color:#000;font-weight:normal;font-size:8.1px;letter-spacing:0.1px;-webkit-text-stroke:0.1px #000;"><div style="position:absolute;top:-5px;line-height:20px;white-space:pre;left:2px;">Geospatial Solutions</div><div style="position:absolute;top:6px;line-height:20px;white-space:pre;left:2px;">Nov</div></div>
<div style="position:absolute;left:474px;top:224px;width:27px;height:20px;overflow:hidden;color:#000;font-weight:normal;font-size:8.4px;letter-spacing:0.15px;"><div style="position:absolute;top:5px;line-height:20px;white-space:pre;right:0px;">58</div></div>
<div style="position:absolute;left:502px;top:224px;width:28px;height:20px;overflow:hidden;color:#000;font-weight:normal;font-size:8.4px;letter-spacing:0px;"><div style="position:absolute;top:5px;line-height:20px;white-space:pre;right:0px;">0</div></div>
<div style="position:absolute;left:531px;top:224px;width:22px;height:20px;overflow:hidden;color:#000;font-weight:normal;font-size:8.4px;letter-spacing:0px;"><div style="position:absolute;top:5px;line-height:20px;white-space:pre;right:0px;">2</div></div>
<div style="position:absolute;left:554px;top:224px;width:52px;height:20px;overflow:hidden;color:#000;font-weight:normal;font-size:8.4px;letter-spacing:0.15px;"><div style="position:absolute;top:5px;line-height:20px;white-space:pre;right:0px;">0</div></div>
<div style="position:absolute;left:607px;top:224px;width:58px;height:20px;overflow:hidden;color:#000;font-weight:normal;font-size:8.4px;letter-spacing:0.15px;"><div style="position:absolute;top:5px;line-height:20px;white-space:pre;right:1px;">10</div></div>
<div style="position:absolute;left:666px;top:224px;width:47px;height:20px;overflow:hidden;color:#000;font-weight:normal;font-size:8.4px;letter-spacing:0px;"><div style="position:absolute;top:5px;line-height:20px;white-space:pre;right:1px;">0</div></div>
<div style="position:absolute;left:714px;top:224px;width:292px;height:20px;overflow:hidden;color:#000;font-weight:normal;font-size:8.0px;letter-spacing:0.0px;-webkit-text-stroke:0.15px #000;"><div style="position:absolute;top:5px;line-height:20px;white-space:pre;left:2px;">not available</div></div>
<div style="position:absolute;left:23px;top:245px;width:91px;height:31px;overflow:hidden;color:#8686B4;font-weight:bold;font-size:8.4px;letter-spacing:0.65px;-webkit-text-stroke-width:0.25px;"><div style="position:absolute;top:16px;line-height:20px;white-space:pre;left:3px;">bellavista,2001</div></div>
<div style="position:absolute;left:115px;top:245px;width:108px;height:31px;overflow:hidden;color:#800080;font-weight:bold;font-size:8.4px;letter-spacing:0.65px;-webkit-text-stroke-width:0.25px;"><div style="position:absolute;top:5px;line-height:20px;white-space:pre;left:3px;">Bellavista, P. Corradi,</div><div style="position:absolute;top:16px;line-height:20px;white-space:pre;left:3px;">A. / Stefanelli, C.</div></div>
<div style="position:absolute;left:224px;top:245px;width:129px;height:31px;overflow:hidden;color:#000080;font-weight:bold;font-size:8.4px;letter-spacing:0.65px;-webkit-text-stroke-width:0.25px;"><div style="position:absolute;top:-5px;line-height:20px;white-space:pre;left:-50px;right:-50px;text-align:center;">Middleware services for</div><div style="position:absolute;top:6px;line-height:20px;white-space:pre;left:-50px;right:-50px;text-align:center;">interoperability in open</div><div style="position:absolute;top:17px;line-height:20px;white-space:pre;left:-50px;right:-50px;text-align:center;">mobile agent systems</div></div>
<div style="position:absolute;left:354px;top:245px;width:32px;height:31px;overflow:hidden;color:#000;font-weight:normal;font-size:8.4px;letter-spacing:0.15px;"><div style="position:absolute;top:16px;line-height:20px;white-space:pre;right:1px;">2001</div></div>
<div style="position:absolute;left:387px;top:245px;width:86px;height:31px;overflow:hidden;color:#000;font-weight:normal;font-size:8.1px;letter-spacing:0.1px;-webkit-text-stroke:0.1px #000;"><div style="position:absolute;top:6px;line-height:20px;white-space:pre;left:2px;">Microprocessors and</div><div style="position:absolute;top:17px;line-height:20px;white-space:pre;left:2px;">Microsystems 25</div></div>
<div style="position:absolute;left:474px;top:245px;width:27px;height:31px;overflow:hidden;color:#000;font-weight:normal;font-size:8.4px;letter-spacing:0.15px;"><div style="position:absolute;top:5px;line-height:20px;white-space:pre;left:2px;">75 -</div><div style="position:absolute;top:16px;line-height:20px;white-space:pre;left:2px;">83</div></div>
<div style="position:absolute;left:502px;top:245px;width:28px;height:31px;overflow:hidden;color:#000;font-weight:normal;font-size:8.4px;letter-spacing:0px;"><div style="position:absolute;top:16px;line-height:20px;white-space:pre;right:0px;">0</div></div>
<div style="position:absolute;left:531px;top:245px;width:22px;height:31px;overflow:hidden;color:#000;font-weight:normal;font-size:8.4px;letter-spacing:0px;"><div style="position:absolute;top:16px;line-height:20px;white-space:pre;right:0px;">2</div></div>
<div style="position:absolute;left:554px;top:245px;width:52px;height:31px;overflow:hidden;color:#000;font-weight:normal;font-size:8.4px;letter-spacing:0.15px;"><div style="position:absolute;top:16px;line-height:20px;white-space:pre;right:0px;">10</div></div>
<div style="position:absolute;left:607px;top:245px;width:58px;height:31px;overflow:hidden;color:#000;font-weight:normal;font-size:8.4px;letter-spacing:0.15px;"><div style="position:absolute;top:16px;line-height:20px;white-space:pre;right:1px;">0</div></div>
<div style="position:absolute;left:666px;top:245px;width:47px;height:31px;overflow:hidden;color:#000;font-weight:normal;font-size:8.4px;letter-spacing:0px;"><div style="position:absolute;top:16px;line-height:20px;white-space:pre;right:1px;">0</div></div>
<div style="position:absolute;left:714px;top:245px;width:292px;height:31px;overflow:hidden;color:#000;font-weight:normal;font-size:8.0px;letter-spacing:0.0px;-webkit-text-stroke:0.15px #000;"><div style="position:absolute;top:16px;line-height:20px;white-space:pre;left:2px;">not available</div></div>
<div style="position:absolute;left:23px;top:277px;width:91px;height:55px;overflow:hidden;color:#939393;font-weight:bold;font-size:8.4px;letter-spacing:0.65px;-webkit-text-stroke-width:0.25px;"><div style="position:absolute;top:40px;line-height:20px;white-space:pre;left:3px;">davis,2002</div></div>
<div style="position:absolute;left:115px;top:277px;width:108px;height:55px;overflow:hidden;color:#800080;font-weight:bold;font-size:8.4px;letter-spacing:0.65px;-webkit-text-stroke-width:0.25px;"><div style="position:absolute;top:29px;line-height:20px;white-space:pre;left:3px;">Davis, L. Gamble, R. F.</div><div style="position:absolute;top:40px;line-height:20px;white-space:pre;left:3px;">/ Payton, J.</div></div>
<div style="position:absolute;left:224px;top:277px;width:129px;height:55px;overflow:hidden;color:#2C2C9C;font-weight:bold;font-size:8.4px;letter-spacing:0.65px;-webkit-text-stroke-width:0.25px;"><div style="position:absolute;top:6px;line-height:20px;white-space:pre;left:-50px;right:-50px;text-align:center;">The impact of component</div><div style="position:absolute;top:17px;line-height:20px;white-space:pre;left:-50px;right:-50px;text-align:center;">architectures on</div><div style="position:absolute;top:28px;line-height:20px;white-space:pre;left:-50px;right:-50px;text-align:center;">interoperability</div></div>
<div style="position:absolute;left:354px;top:277px;width:32px;height:55px;overflow:hidden;color:#000;font-weight:normal;font-size:8.4px;letter-spacing:0.15px;"><div style="position:absolute;top:40px;line-height:20px;white-space:pre;right:1px;">2002</div></div>
<div style="position:absolute;left:387px;top:277px;width:86px;height:55px;overflow:hidden;color:#000;font-weight:normal;font-size:8.1px;letter-spacing:0.1px;-webkit-text-stroke:0.1px #000;"><div style="position:absolute;top:19px;line-height:20px;white-space:pre;left:2px;">The Journal of</div><div style="position:absolute;top:30px;line-height:20px;white-space:pre;left:2px;">Systems and Software</div><div style="position:absolute;top:41px;line-height:20px;white-space:pre;left:2px;">61</div></div>
<div style="position:absolute;left:474px;top:277px;width:27px;height:55px;overflow:hidden;color:#000;font-weight:normal;font-size:8.4px;letter-spacing:0.15px;"><div style="position:absolute;top:29px;line-height:20px;white-space:pre;left:2px;">31 -</div><div style="position:absolute;top:40px;line-height:20px;white-space:pre;left:2px;">45</div></div>
<div style="position:absolute;left:502px;top:277px;width:28px;height:55px;overflow:hidden;color:#000;font-weight:normal;font-size:8.4px;letter-spacing:0px;"><div style="position:absolute;top:40px;line-height:20px;white-space:pre;right:0px;">0</div></div>
<div style="position:absolute;left:531px;top:277px;width:22px;height:55px;overflow:hidden;color:#000;font-weight:normal;font-size:8.4px;letter-spacing:0px;"><div style="position:absolute;top:40px;line-height:20px;white-space:pre;right:0px;">2</div></div>
<div style="position:absolute;left:554px;top:277px;width:52px;height:55px;overflow:hidden;color:#000;font-weight:normal;font-size:8.4px;letter-spacing:0.15px;"><div style="position:absolute;top:40px;line-height:20px;white-space:pre;right:0px;">10</div></div>
<div style="position:absolute;left:607px;top:277px;width:58px;height:55px;overflow:hidden;color:#000;font-weight:normal;font-size:8.4px;letter-spacing:0.15px;"><div style="position:absolute;top:40px;line-height:20px;white-space:pre;right:1px;">0</div></div>
<div style="position:absolute;left:666px;top:277px;width:47px;height:55px;overflow:hidden;color:#000;font-weight:normal;font-size:8.4px;letter-spacing:0px;"><div style="position:absolute;top:40px;line-height:20px;white-space:pre;right:1px;">0</div></div>
<div style="position:absolute;left:714px;top:277px;width:292px;height:55px;overflow:hidden;color:#000;font-weight:normal;font-size:8.0px;letter-spacing:0.0px;-webkit-text-stroke:0.15px #000;"><div style="position:absolute;top:-3px;line-height:20px;white-space:pre;left:2px;">and assemble modules from disparate sources into a single application. While microcomponents do</div><div style="position:absolute;top:8px;line-height:20px;white-space:pre;left:2px;">not form a complete bridge between components and may be inflexible as the application</div><div style="position:absolute;top:18px;line-height:20px;white-space:pre;left:2px;">design information that will forecast a more accurate, evolvable, and less costly integration</div><div style="position:absolute;top:29px;line-height:20px;white-space:pre;left:2px;">Emerging research has shown that interoperability problems can be traced to the</div><div style="position:absolute;top:40px;line-height:20px;white-space:pre;left:2px;">integrated application. Furthermore, the solutions generated for these problems are</div></div>
<div style="position:absolute;left:23px;top:333px;width:91px;height:63px;overflow:hidden;color:#939393;font-weight:bold;font-size:8.4px;letter-spacing:0.65px;-webkit-text-stroke-width:0.25px;"><div style="position:absolute;top:48px;line-height:20px;white-space:pre;left:3px;">jha,2004</div></div>
<div style="position:absolute;left:115px;top:333px;width:108px;height:63px;overflow:hidden;color:#800080;font-weight:bold;font-size:8.4px;letter-spacing:0.65px;-webkit-text-stroke-width:0.25px;"><div style="position:absolute;top:48px;line-height:20px;white-space:pre;left:3px;">Jha, U. S.</div></div>
<div style="position:absolute;left:224px;top:333px;width:129px;height:63px;overflow:hidden;color:#2C2C9C;font-weight:bold;font-size:8.4px;letter-spacing:0.65px;-webkit-text-stroke-width:0.25px;"><div style="position:absolute;top:10px;line-height:20px;white-space:pre;left:-50px;right:-50px;text-align:center;">Adaptive Communication</div><div style="position:absolute;top:21px;line-height:20px;white-space:pre;left:-50px;right:-50px;text-align:center;">Services Key to Global</div><div style="position:absolute;top:32px;line-height:20px;white-space:pre;left:-50px;right:-50px;text-align:center;">Interoperability</div></div>
<div style="position:absolute;left:354px;top:333px;width:32px;height:63px;overflow:hidden;color:#000;font-weight:normal;font-size:8.4px;letter-spacing:0.15px;"><div style="position:absolute;top:48px;line-height:20px;white-space:pre;right:1px;">2004</div></div>
<div style="position:absolute;left:387px;top:333px;width:86px;height:63px;overflow:hidden;color:#000;font-weight:normal;font-size:8.1px;letter-spacing:0.1px;-webkit-text-stroke:0.1px #000;"><div style="position:absolute;top:38px;line-height:20px;white-space:pre;left:2px;">Wireless Personal</div><div style="position:absolute;top:49px;line-height:20px;white-space:pre;left:2px;">Communications 29:</div></div>
<div style="position:absolute;left:474px;top:333px;width:27px;height:63px;overflow:hidden;color:#000;font-weight:normal;font-size:8.4px;letter-spacing:0.15px;"><div style="position:absolute;top:48px;line-height:20px;white-space:pre;left:2px;">21-33</div></div>
<div style="position:absolute;left:502px;top:333px;width:28px;height:63px;overflow:hidden;color:#000;font-weight:normal;font-size:8.4px;letter-spacing:0px;"><div style="position:absolute;top:48px;line-height:20px;white-space:pre;right:0px;">0</div></div>
<div style="position:absolute;left:531px;top:333px;width:22px;height:63px;overflow:hidden;color:#000;font-weight:normal;font-size:8.4px;letter-spacing:0px;"><div style="position:absolute;top:48px;line-height:20px;white-space:pre;right:0px;">2</div></div>
<div style="position:absolute;left:554px;top:333px;width:52px;height:63px;overflow:hidden;color:#000;font-weight:normal;font-size:8.4px;letter-spacing:0.15px;"><div style="position:absolute;top:48px;line-height:20px;white-space:pre;right:0px;">10</div></div>
<div style="position:absolute;left:607px;top:333px;width:58px;height:63px;overflow:hidden;color:#000;font-weight:normal;font-size:8.4px;letter-spacing:0.15px;"><div style="position:absolute;top:48px;line-height:20px;white-space:pre;right:1px;">0</div></div>
<div style="position:absolute;left:666px;top:333px;width:47px;height:63px;overflow:hidden;color:#000;font-weight:normal;font-size:8.4px;letter-spacing:0px;"><div style="position:absolute;top:48px;line-height:20px;white-space:pre;right:1px;">0</div></div>
<div style="position:absolute;left:714px;top:333px;width:292px;height:63px;overflow:hidden;color:#000;font-weight:normal;font-size:8.0px;letter-spacing:0.0px;-webkit-text-stroke:0.15px #000;"><div style="position:absolute;top:-6px;line-height:20px;white-space:pre;left:2px;">Abstract. The purpose of this paper is to delineate the communication service issues</div><div style="position:absolute;top:5px;line-height:20px;white-space:pre;left:2px;">platform interoperability and suggests possible solutions towards global interoperability</div><div style="position:absolute;top:16px;line-height:20px;white-space:pre;left:2px;">proposes a spiral-based roadmap tailored to the interoperability needs of existing</div><div style="position:absolute;top:26px;line-height:20px;white-space:pre;left:2px;">spiral development emphasizes the nonintrusive and cost effective means towards</div><div style="position:absolute;top:37px;line-height:20px;white-space:pre;left:2px;">interoperability via gateways; next phase proposes to replace these gateways with</div><div style="position:absolute;top:48px;line-height:20px;white-space:pre;left:2px;">efficient wideband and highly available systems and subsequent phases provide the</div></div>
<div style="position:absolute;left:23px;top:397px;width:91px;height:48px;overflow:hidden;color:#939393;font-weight:bold;font-size:8.4px;letter-spacing:0.65px;-webkit-text-stroke-width:0.25px;"><div style="position:absolute;top:33px;line-height:20px;white-space:pre;left:3px;">lee,1996</div></div>
<div style="position:absolute;left:115px;top:397px;width:108px;height:48px;overflow:hidden;color:#800080;font-weight:bold;font-size:8.4px;letter-spacing:0.65px;-webkit-text-stroke-width:0.25px;"><div style="position:absolute;top:22px;line-height:20px;white-space:pre;left:3px;">Lee, J. And Siegel, M.</div><div style="position:absolute;top:33px;line-height:20px;white-space:pre;left:3px;">D.</div></div>
<div style="position:absolute;left:224px;top:397px;width:129px;height:48px;overflow:hidden;color:#2C2C9C;font-weight:bold;font-size:8.4px;letter-spacing:0.65px;-webkit-text-stroke-width:0.25px;"><div style="position:absolute;top:-3px;line-height:20px;white-space:pre;left:-50px;right:-50px;text-align:center;">An ontological and</div><div style="position:absolute;top:8px;line-height:20px;white-space:pre;left:-50px;right:-50px;text-align:center;">semantical approach to</div><div style="position:absolute;top:19px;line-height:20px;white-space:pre;left:-50px;right:-50px;text-align:center;">source-receiver</div><div style="position:absolute;top:30px;line-height:20px;white-space:pre;left:-50px;right:-50px;text-align:center;">interoperability</div></div>
<div style="position:absolute;left:354px;top:397px;width:32px;height:48px;overflow:hidden;color:#000;font-weight:normal;font-size:8.4px;letter-spacing:0.15px;"><div style="position:absolute;top:33px;line-height:20px;white-space:pre;right:1px;">1996</div></div>
<div style="position:absolute;left:387px;top:397px;width:86px;height:48px;overflow:hidden;color:#000;font-weight:normal;font-size:8.1px;letter-spacing:0.1px;-webkit-text-stroke:0.1px #000;"><div style="position:absolute;top:23px;line-height:20px;white-space:pre;left:2px;">Decision Support</div><div style="position:absolute;top:34px;line-height:20px;white-space:pre;left:2px;">Systems 18</div></div>
<div style="position:absolute;left:474px;top:397px;width:27px;height:48px;overflow:hidden;color:#000;font-weight:normal;font-size:8.4px;letter-spacing:0.15px;"><div style="position:absolute;top:22px;line-height:20px;white-space:pre;left:2px;">145-</div><div style="position:absolute;top:33px;line-height:20px;white-space:pre;left:2px;">158</div></div>
<div style="position:absolute;left:502px;top:397px;width:28px;height:48px;overflow:hidden;color:#000;font-weight:normal;font-size:8.4px;letter-spacing:0px;"><div style="position:absolute;top:33px;line-height:20px;white-space:pre;right:0px;">0</div></div>
<div style="position:absolute;left:531px;top:397px;width:22px;height:48px;overflow:hidden;color:#000;font-weight:normal;font-size:8.4px;letter-spacing:0px;"><div style="position:absolute;top:33px;line-height:20px;white-space:pre;right:0px;">2</div></div>
<div style="position:absolute;left:554px;top:397px;width:52px;height:48px;overflow:hidden;color:#000;font-weight:normal;font-size:8.4px;letter-spacing:0.15px;"><div style="position:absolute;top:33px;line-height:20px;white-space:pre;right:0px;">10</div></div>
<div style="position:absolute;left:607px;top:397px;width:58px;height:48px;overflow:hidden;color:#000;font-weight:normal;font-size:8.4px;letter-spacing:0.15px;"><div style="position:absolute;top:33px;line-height:20px;white-space:pre;right:1px;">0</div></div>
<div style="position:absolute;left:666px;top:397px;width:47px;height:48px;overflow:hidden;color:#000;font-weight:normal;font-size:8.4px;letter-spacing:0px;"><div style="position:absolute;top:33px;line-height:20px;white-space:pre;right:1px;">0</div></div>
<div style="position:absolute;left:714px;top:397px;width:292px;height:48px;overflow:hidden;color:#000;font-weight:normal;font-size:8.0px;letter-spacing:0.0px;-webkit-text-stroke:0.15px #000;"><div style="position:absolute;top:-10px;line-height:20px;white-space:pre;left:2px;">Given the current explosion of information resources available to decision makers</div><div style="position:absolute;top:1px;line-height:20px;white-space:pre;left:2px;">between a data source (e.g., a database) and a data receiver (e.g., a decision maker</div><div style="position:absolute;top:11px;line-height:20px;white-space:pre;left:2px;">makers interact with unfamiliar sources that have been independently created and m</div><div style="position:absolute;top:22px;line-height:20px;white-space:pre;left:2px;">non-trivial cognitive effort to understand the meaning of the information contained</div><div style="position:absolute;top:33px;line-height:20px;white-space:pre;left:2px;">problem, an architecture called the Context Interchange Architecture is proposed.</div></div>
<div style="position:absolute;left:23px;top:446px;width:91px;height:55px;overflow:hidden;color:#939393;font-weight:bold;font-size:8.4px;letter-spacing:0.65px;-webkit-text-stroke-width:0.25px;"><div style="position:absolute;top:40px;line-height:20px;white-space:pre;left:3px;">Augenbroe,2004</div></div>
<div style="position:absolute;left:115px;top:446px;width:108px;height:55px;overflow:hidden;color:#800080;font-weight:bold;font-size:8.4px;letter-spacing:0.65px;-webkit-text-stroke-width:0.25px;"><div style="position:absolute;top:40px;line-height:20px;white-space:pre;left:3px;">Augenbroe, G. Et al</div></div>
<div style="position:absolute;left:224px;top:446px;width:129px;height:55px;overflow:hidden;color:#2C2C9C;font-weight:bold;font-size:8.4px;letter-spacing:0.65px;-webkit-text-stroke-width:0.25px;"><div style="position:absolute;top:6px;line-height:20px;white-space:pre;left:-50px;right:-50px;text-align:center;">An interoperability</div><div style="position:absolute;top:17px;line-height:20px;white-space:pre;left:-50px;right:-50px;text-align:center;">workbench for design</div><div style="position:absolute;top:28px;line-height:20px;white-space:pre;left:-50px;right:-50px;text-align:center;">analysis integration</div></div>
<div style="position:absolute;left:354px;top:446px;width:32px;height:55px;overflow:hidden;color:#000;font-weight:normal;font-size:8.4px;letter-spacing:0.15px;"><div style="position:absolute;top:40px;line-height:20px;white-space:pre;right:1px;">2004</div></div>
<div style="position:absolute;left:387px;top:446px;width:86px;height:55px;overflow:hidden;color:#000;font-weight:normal;font-size:8.1px;letter-spacing:0.1px;-webkit-text-stroke:0.1px #000;"><div style="position:absolute;top:30px;line-height:20px;white-space:pre;left:2px;">Energy and Buildings</div><div style="position:absolute;top:41px;line-height:20px;white-space:pre;left:2px;">36 (</div></div>
<div style="position:absolute;left:474px;top:446px;width:27px;height:55px;overflow:hidden;color:#000;font-weight:normal;font-size:8.4px;letter-spacing:0.15px;"><div style="position:absolute;top:29px;line-height:20px;white-space:pre;left:2px;">737-7</div><div style="position:absolute;top:40px;line-height:20px;white-space:pre;left:2px;">48</div></div>
<div style="position:absolute;left:502px;top:446px;width:28px;height:55px;overflow:hidden;color:#000;font-weight:normal;font-size:8.4px;letter-spacing:0px;"><div style="position:absolute;top:40px;line-height:20px;white-space:pre;right:0px;">0</div></div>
<div style="position:absolute;left:531px;top:446px;width:22px;height:55px;overflow:hidden;color:#000;font-weight:normal;font-size:8.4px;letter-spacing:0px;"><div style="position:absolute;top:40px;line-height:20px;white-space:pre;right:0px;">2</div></div>
<div style="position:absolute;left:554px;top:446px;width:52px;height:55px;overflow:hidden;color:#000;font-weight:normal;font-size:8.4px;letter-spacing:0.15px;"><div style="position:absolute;top:40px;line-height:20px;white-space:pre;right:0px;">10</div></div>
<div style="position:absolute;left:607px;top:446px;width:58px;height:55px;overflow:hidden;color:#000;font-weight:normal;font-size:8.4px;letter-spacing:0.15px;"><div style="position:absolute;top:40px;line-height:20px;white-space:pre;right:1px;">0</div></div>
<div style="position:absolute;left:666px;top:446px;width:47px;height:55px;overflow:hidden;color:#000;font-weight:normal;font-size:8.4px;letter-spacing:0px;"><div style="position:absolute;top:40px;line-height:20px;white-space:pre;right:1px;">0</div></div>
<div style="position:absolute;left:714px;top:446px;width:292px;height:55px;overflow:hidden;color:#000;font-weight:normal;font-size:8.0px;letter-spacing:0.0px;-webkit-text-stroke:0.15px #000;"><div style="position:absolute;top:-3px;line-height:20px;white-space:pre;left:2px;">software applications. These efforts have been dominated by an interoperability f</div><div style="position:absolute;top:8px;line-height:20px;white-space:pre;left:2px;">solutions suffer from several limitations. For one, they assume a &#x27;perfect world&#x27; in</div><div style="position:absolute;top:18px;line-height:20px;white-space:pre;left:2px;">between design and analysis representations exist on a generic level. Secondly, m</div><div style="position:absolute;top:29px;line-height:20px;white-space:pre;left:2px;">true design analysis integration requires a &quot;language&quot; to express both analysis re</div><div style="position:absolute;top:40px;line-height:20px;white-space:pre;left:2px;">responding to these requests. An intrinsic part of this language is the logic of the</div></div>
<div style="position:absolute;left:23px;top:502px;width:91px;height:20px;overflow:hidden;color:#939393;font-weight:bold;font-size:8.4px;letter-spacing:0.65px;-webkit-text-stroke-width:0.25px;"><div style="position:absolute;top:5px;line-height:20px;white-space:pre;left:3px;">williams,2000</div></div>
<div style="position:absolute;left:115px;top:502px;width:108px;height:20px;overflow:hidden;color:#800080;font-weight:bold;font-size:8.4px;letter-spacing:0.65px;-webkit-text-stroke-width:0.25px;"><div style="position:absolute;top:-6px;line-height:20px;white-space:pre;left:3px;">Williams, C. And</div><div style="position:absolute;top:5px;line-height:20px;white-space:pre;left:3px;">Zunic, N.</div></div>
<div style="position:absolute;left:224px;top:502px;width:129px;height:20px;overflow:hidden;color:#2C2C9C;font-weight:bold;font-size:8.4px;letter-spacing:0.65px;-webkit-text-stroke-width:0.25px;"><div style="position:absolute;top:-5px;line-height:20px;white-space:pre;left:-50px;right:-50px;text-align:center;">Global Interoperability for</div><div style="position:absolute;top:6px;line-height:20px;white-space:pre;left:-50px;right:-50px;text-align:center;">Key Recovery Schemes</div></div>
<div style="position:absolute;left:354px;top:502px;width:32px;height:20px;overflow:hidden;color:#000;font-weight:normal;font-size:8.4px;letter-spacing:0.15px;"><div style="position:absolute;top:5px;line-height:20px;white-space:pre;right:1px;">2000</div></div>
<div style="position:absolute;left:387px;top:502px;width:86px;height:20px;overflow:hidden;color:#000;font-weight:normal;font-size:8.1px;letter-spacing:0.1px;-webkit-text-stroke:0.1px #000;"><div style="position:absolute;top:-5px;line-height:20px;white-space:pre;left:2px;">Computers and</div><div style="position:absolute;top:6px;line-height:20px;white-space:pre;left:2px;">Security 19, 1</div></div>
<div style="position:absolute;left:474px;top:502px;width:27px;height:20px;overflow:hidden;color:#000;font-weight:normal;font-size:8.4px;letter-spacing:0.15px;"><div style="position:absolute;top:-6px;line-height:20px;white-space:pre;left:2px;">49 -</div><div style="position:absolute;top:5px;line-height:20px;white-space:pre;left:2px;">55</div></div>
<div style="position:absolute;left:502px;top:502px;width:28px;height:20px;overflow:hidden;color:#000;font-weight:normal;font-size:8.4px;letter-spacing:0px;"><div style="position:absolute;top:5px;line-height:20px;white-space:pre;right:0px;">0</div></div>
<div style="position:absolute;left:531px;top:502px;width:22px;height:20px;overflow:hidden;color:#000;font-weight:normal;font-size:8.4px;letter-spacing:0px;"><div style="position:absolute;top:5px;line-height:20px;white-space:pre;right:0px;">2</div></div>
<div style="position:absolute;left:554px;top:502px;width:52px;height:20px;overflow:hidden;color:#000;font-weight:normal;font-size:8.4px;letter-spacing:0.15px;"><div style="position:absolute;top:5px;line-height:20px;white-space:pre;right:0px;">10</div></div>
<div style="position:absolute;left:607px;top:502px;width:58px;height:20px;overflow:hidden;color:#000;font-weight:normal;font-size:8.4px;letter-spacing:0.15px;"><div style="position:absolute;top:5px;line-height:20px;white-space:pre;right:1px;">0</div></div>
<div style="position:absolute;left:666px;top:502px;width:47px;height:20px;overflow:hidden;color:#000;font-weight:normal;font-size:8.4px;letter-spacing:0px;"><div style="position:absolute;top:5px;line-height:20px;white-space:pre;right:1px;">0</div></div>
<div style="position:absolute;left:714px;top:502px;width:292px;height:20px;overflow:hidden;color:#000;font-weight:normal;font-size:8.0px;letter-spacing:0.0px;-webkit-text-stroke:0.15px #000;"><div style="position:absolute;top:5px;line-height:20px;white-space:pre;left:2px;">not available</div></div>
<div style="position:absolute;left:23px;top:523px;width:91px;height:31px;overflow:hidden;color:#939393;font-weight:bold;font-size:8.4px;letter-spacing:0.65px;-webkit-text-stroke-width:0.25px;"><div style="position:absolute;top:16px;line-height:20px;white-space:pre;left:3px;">kraemer,1986</div></div>
<div style="position:absolute;left:115px;top:523px;width:108px;height:31px;overflow:hidden;color:#800080;font-weight:bold;font-size:8.4px;letter-spacing:0.65px;-webkit-text-stroke-width:0.25px;"><div style="position:absolute;top:5px;line-height:20px;white-space:pre;left:3px;">Kraemer, K. L. &amp; King,</div><div style="position:absolute;top:16px;line-height:20px;white-space:pre;left:3px;">J. L.</div></div>
<div style="position:absolute;left:224px;top:523px;width:129px;height:31px;overflow:hidden;color:#2C2C9C;font-weight:bold;font-size:8.4px;letter-spacing:0.65px;-webkit-text-stroke-width:0.25px;"><div style="position:absolute;top:-1px;line-height:20px;white-space:pre;left:-50px;right:-50px;text-align:center;">Computing and public</div><div style="position:absolute;top:10px;line-height:20px;white-space:pre;left:-50px;right:-50px;text-align:center;">organisations</div></div>
<div style="position:absolute;left:354px;top:523px;width:32px;height:31px;overflow:hidden;color:#000;font-weight:normal;font-size:8.4px;letter-spacing:0.15px;"><div style="position:absolute;top:16px;line-height:20px;white-space:pre;right:1px;">1986</div></div>
<div style="position:absolute;left:387px;top:523px;width:86px;height:31px;overflow:hidden;color:#000;font-weight:normal;font-size:8.1px;letter-spacing:0.1px;-webkit-text-stroke:0.1px #000;"><div style="position:absolute;top:6px;line-height:20px;white-space:pre;left:2px;">Public Administration</div><div style="position:absolute;top:17px;line-height:20px;white-space:pre;left:2px;">Review</div></div>
<div style="position:absolute;left:474px;top:523px;width:27px;height:31px;overflow:hidden;color:#000;font-weight:normal;font-size:8.4px;letter-spacing:0.15px;"><div style="position:absolute;top:5px;line-height:20px;white-space:pre;left:2px;">488 -</div><div style="position:absolute;top:16px;line-height:20px;white-space:pre;left:2px;">496</div></div>
<div style="position:absolute;left:502px;top:523px;width:28px;height:31px;overflow:hidden;color:#000;font-weight:normal;font-size:8.4px;letter-spacing:0px;"><div style="position:absolute;top:16px;line-height:20px;white-space:pre;right:0px;">0</div></div>
<div style="position:absolute;left:531px;top:523px;width:22px;height:31px;overflow:hidden;color:#000;font-weight:normal;font-size:8.4px;letter-spacing:0px;"><div style="position:absolute;top:16px;line-height:20px;white-space:pre;right:0px;">2</div></div>
<div style="position:absolute;left:554px;top:523px;width:52px;height:31px;overflow:hidden;color:#000;font-weight:normal;font-size:8.4px;letter-spacing:0.15px;"><div style="position:absolute;top:16px;line-height:20px;white-space:pre;right:0px;">0</div></div>
<div style="position:absolute;left:607px;top:523px;width:58px;height:31px;overflow:hidden;color:#000;font-weight:normal;font-size:8.4px;letter-spacing:0.15px;"><div style="position:absolute;top:16px;line-height:20px;white-space:pre;right:1px;">3</div></div>
<div style="position:absolute;left:666px;top:523px;width:47px;height:31px;overflow:hidden;color:#000;font-weight:normal;font-size:8.4px;letter-spacing:0px;"><div style="position:absolute;top:16px;line-height:20px;white-space:pre;right:1px;">7</div></div>
<div style="position:absolute;left:714px;top:523px;width:292px;height:31px;overflow:hidden;color:#000;font-weight:normal;font-size:8.0px;letter-spacing:0.0px;-webkit-text-stroke:0.15px #000;"><div style="position:absolute;top:16px;line-height:20px;white-space:pre;left:2px;">not available</div></div>
<div style="position:absolute;left:23px;top:555px;width:91px;height:47px;overflow:hidden;color:#939393;font-weight:bold;font-size:8.4px;letter-spacing:0.65px;-webkit-text-stroke-width:0.25px;"><div style="position:absolute;top:32px;line-height:20px;white-space:pre;left:3px;">cardoso,2003</div></div>
<div style="position:absolute;left:115px;top:555px;width:108px;height:47px;overflow:hidden;color:#800080;font-weight:bold;font-size:8.4px;letter-spacing:0.65px;-webkit-text-stroke-width:0.25px;"><div style="position:absolute;top:21px;line-height:20px;white-space:pre;left:3px;">Cardoso, J. &amp; Sheth,</div><div style="position:absolute;top:32px;line-height:20px;white-space:pre;left:3px;">A.</div></div>
<div style="position:absolute;left:224px;top:555px;width:129px;height:47px;overflow:hidden;color:#2C2C9C;font-weight:bold;font-size:8.4px;letter-spacing:0.65px;-webkit-text-stroke-width:0.25px;"><div style="position:absolute;top:7px;line-height:20px;white-space:pre;left:-50px;right:-50px;text-align:center;">Semantic E-Workflow</div><div style="position:absolute;top:18px;line-height:20px;white-space:pre;left:-50px;right:-50px;text-align:center;">Composition</div></div>
<div style="position:absolute;left:354px;top:555px;width:32px;height:47px;overflow:hidden;color:#000;font-weight:normal;font-size:8.4px;letter-spacing:0.15px;"><div style="position:absolute;top:32px;line-height:20px;white-space:pre;right:1px;">2003</div></div>
<div style="position:absolute;left:387px;top:555px;width:86px;height:47px;overflow:hidden;color:#000;font-weight:normal;font-size:8.1px;letter-spacing:0.1px;-webkit-text-stroke:0.1px #000;"><div style="position:absolute;top:11px;line-height:20px;white-space:pre;left:2px;">Journal of Intelligent</div><div style="position:absolute;top:22px;line-height:20px;white-space:pre;left:2px;">Information Systems,</div><div style="position:absolute;top:33px;line-height:20px;white-space:pre;left:2px;">21:3,</div></div>
<div style="position:absolute;left:474px;top:555px;width:27px;height:47px;overflow:hidden;color:#000;font-weight:normal;font-size:8.4px;letter-spacing:0.15px;"><div style="position:absolute;top:21px;line-height:20px;white-space:pre;left:2px;">191-2</div><div style="position:absolute;top:32px;line-height:20px;white-space:pre;left:2px;">25,</div></div>
<div style="position:absolute;left:502px;top:555px;width:28px;height:47px;overflow:hidden;color:#000;font-weight:normal;font-size:8.4px;letter-spacing:0px;"><div style="position:absolute;top:32px;line-height:20px;white-space:pre;right:0px;">0</div></div>
<div style="position:absolute;left:531px;top:555px;width:22px;height:47px;overflow:hidden;color:#000;font-weight:normal;font-size:8.4px;letter-spacing:0px;"><div style="position:absolute;top:32px;line-height:20px;white-space:pre;right:0px;">2</div></div>
<div style="position:absolute;left:554px;top:555px;width:52px;height:47px;overflow:hidden;color:#000;font-weight:normal;font-size:8.4px;letter-spacing:0.15px;"><div style="position:absolute;top:32px;line-height:20px;white-space:pre;right:0px;">10</div></div>
<div style="position:absolute;left:607px;top:555px;width:58px;height:47px;overflow:hidden;color:#000;font-weight:normal;font-size:8.4px;letter-spacing:0.15px;"><div style="position:absolute;top:32px;line-height:20px;white-space:pre;right:1px;">0</div></div>
<div style="position:absolute;left:666px;top:555px;width:47px;height:47px;overflow:hidden;color:#000;font-weight:normal;font-size:8.4px;letter-spacing:0px;"><div style="position:absolute;top:32px;line-height:20px;white-space:pre;right:1px;">0</div></div>
<div style="position:absolute;left:714px;top:555px;width:292px;height:47px;overflow:hidden;color:#000;font-weight:normal;font-size:8.0px;letter-spacing:0.0px;-webkit-text-stroke:0.15px #000;"><div style="position:absolute;top:-11px;line-height:20px;white-space:pre;left:2px;">systems and infrastructures are currently being developed to support Web services</div><div style="position:absolute;top:0px;line-height:20px;white-space:pre;left:2px;">is to encapsulate an organization&#x27;s functionality within an appropriate interface and</div><div style="position:absolute;top:10px;line-height:20px;white-space:pre;left:2px;">While in some cases Web services may be utilized in an isolated form, it is normal</div><div style="position:absolute;top:21px;line-height:20px;white-space:pre;left:2px;">integrated as part ofworkflowprocesses. The composition ofworkflowprocesses</div><div style="position:absolute;top:32px;line-height:20px;white-space:pre;left:2px;">differs from the design of traditional workflows, in terms of the number of tasks (</div></div>
<div style="position:absolute;left:23px;top:603px;width:91px;height:41px;overflow:hidden;color:#939393;font-weight:bold;font-size:8.4px;letter-spacing:0.65px;-webkit-text-stroke-width:0.25px;"><div style="position:absolute;top:26px;line-height:20px;white-space:pre;left:3px;">su,1996</div></div>
<div style="position:absolute;left:115px;top:603px;width:108px;height:41px;overflow:hidden;color:#800080;font-weight:bold;font-size:8.4px;letter-spacing:0.65px;-webkit-text-stroke-width:0.25px;"><div style="position:absolute;top:26px;line-height:20px;white-space:pre;left:3px;">Su, S. Y. W. Et al</div></div>
<div style="position:absolute;left:224px;top:603px;width:129px;height:41px;overflow:hidden;color:#2C2C9C;font-weight:bold;font-size:8.4px;letter-spacing:0.65px;-webkit-text-stroke-width:0.25px;"><div style="position:absolute;top:-5px;line-height:20px;white-space:pre;left:-50px;right:-50px;text-align:center;">NCL: A common language</div><div style="position:absolute;top:6px;line-height:20px;white-space:pre;left:-50px;right:-50px;text-align:center;">for achieving Rule-Based</div><div style="position:absolute;top:17px;line-height:20px;white-space:pre;left:-50px;right:-50px;text-align:center;">Interoperability among</div><div style="position:absolute;top:28px;line-height:20px;white-space:pre;left:-50px;right:-50px;text-align:center;">herterogeneous systems</div></div>
<div style="position:absolute;left:354px;top:603px;width:32px;height:41px;overflow:hidden;color:#000;font-weight:normal;font-size:8.4px;letter-spacing:0.15px;"><div style="position:absolute;top:26px;line-height:20px;white-space:pre;right:1px;">1996</div></div>
<div style="position:absolute;left:387px;top:603px;width:86px;height:41px;overflow:hidden;color:#000;font-weight:normal;font-size:8.1px;letter-spacing:0.1px;-webkit-text-stroke:0.1px #000;"><div style="position:absolute;top:27px;line-height:20px;white-space:pre;left:2px;">JIIS, 6</div></div>
<div style="position:absolute;left:474px;top:603px;width:27px;height:41px;overflow:hidden;color:#000;font-weight:normal;font-size:8.4px;letter-spacing:0.15px;"><div style="position:absolute;top:15px;line-height:20px;white-space:pre;left:2px;">171 -</div><div style="position:absolute;top:26px;line-height:20px;white-space:pre;left:2px;">198</div></div>
<div style="position:absolute;left:502px;top:603px;width:28px;height:41px;overflow:hidden;color:#000;font-weight:normal;font-size:8.4px;letter-spacing:0px;"><div style="position:absolute;top:26px;line-height:20px;white-space:pre;right:0px;">0</div></div>
<div style="position:absolute;left:531px;top:603px;width:22px;height:41px;overflow:hidden;color:#000;font-weight:normal;font-size:8.4px;letter-spacing:0px;"><div style="position:absolute;top:26px;line-height:20px;white-space:pre;right:0px;">2</div></div>
<div style="position:absolute;left:554px;top:603px;width:52px;height:41px;overflow:hidden;color:#000;font-weight:normal;font-size:8.4px;letter-spacing:0.15px;"><div style="position:absolute;top:26px;line-height:20px;white-space:pre;right:0px;">10</div></div>
<div style="position:absolute;left:607px;top:603px;width:58px;height:41px;overflow:hidden;color:#000;font-weight:normal;font-size:8.4px;letter-spacing:0.15px;"><div style="position:absolute;top:26px;line-height:20px;white-space:pre;right:1px;">0</div></div>
<div style="position:absolute;left:666px;top:603px;width:47px;height:41px;overflow:hidden;color:#000;font-weight:normal;font-size:8.4px;letter-spacing:0px;"><div style="position:absolute;top:26px;line-height:20px;white-space:pre;right:1px;">0</div></div>
<div style="position:absolute;left:714px;top:603px;width:292px;height:41px;overflow:hidden;color:#000;font-weight:normal;font-size:8.0px;letter-spacing:0.0px;-webkit-text-stroke:0.15px #000;"><div style="position:absolute;top:26px;line-height:20px;white-space:pre;left:2px;">not available</div></div>
<div style="position:absolute;left:23px;top:645px;width:91px;height:25px;overflow:hidden;color:#000;font-weight:bold;font-size:8.6px;letter-spacing:0.6px;-webkit-text-stroke-width:0.25px;"><div style="position:absolute;top:10px;line-height:20px;white-space:pre;left:3px;">Svava,2003</div></div>
<div style="position:absolute;left:23px;top:671px;width:91px;height:42px;overflow:hidden;color:#000;font-weight:bold;font-size:8.6px;letter-spacing:0.6px;-webkit-text-stroke-width:0.25px;"><div style="position:absolute;top:27px;line-height:20px;white-space:pre;left:3px;">Pickavance,2003</div></div>
<div style="position:absolute;left:115px;top:645px;width:108px;height:25px;overflow:hidden;color:#000;font-weight:bold;font-size:8.6px;letter-spacing:0.6px;-webkit-text-stroke-width:0.25px;"><div style="position:absolute;top:10px;line-height:20px;white-space:pre;left:3px;">Svava, J.&nbsp; <i>et al</i></div></div>
<div style="position:absolute;left:115px;top:671px;width:108px;height:42px;overflow:hidden;color:#000;font-weight:bold;font-size:8.6px;letter-spacing:0.6px;-webkit-text-stroke-width:0.25px;"><div style="position:absolute;top:27px;line-height:20px;white-space:pre;left:3px;">Pickavance, L.</div></div>
<div style="position:absolute;left:224px;top:645px;width:129px;height:25px;overflow:hidden;color:#000;font-weight:bold;font-size:8.6px;letter-spacing:0.6px;-webkit-text-stroke-width:0.25px;"><div style="position:absolute;top:2px;line-height:20px;white-space:pre;left:-50px;right:-50px;text-align:center;">eEnvironment</div></div>
<div style="position:absolute;left:224px;top:671px;width:129px;height:42px;overflow:hidden;color:#000;font-weight:bold;font-size:8.6px;letter-spacing:0.6px;-webkit-text-stroke-width:0.25px;"><div style="position:absolute;top:12px;line-height:20px;white-space:pre;left:-50px;right:-50px;text-align:center;">eTransport</div></div>
<div style="position:absolute;left:224px;top:714px;width:129px;height:17px;overflow:hidden;color:#000;font-weight:bold;font-size:8.6px;letter-spacing:0.6px;-webkit-text-stroke-width:0.25px;"><div style="position:absolute;top:3px;line-height:20px;white-space:pre;left:-50px;right:-50px;text-align:center;">eTourism</div></div>
<div style="position:absolute;left:354px;top:645px;width:32px;height:25px;overflow:hidden;color:#000;font-weight:normal;font-size:8.4px;letter-spacing:0.15px;"><div style="position:absolute;top:10px;line-height:20px;white-space:pre;right:1px;">2003</div></div>
<div style="position:absolute;left:387px;top:645px;width:86px;height:25px;overflow:hidden;color:#000;font-weight:normal;font-size:8.3px;letter-spacing:0.15px;-webkit-text-stroke:0.1px #000;"><div style="position:absolute;top:10px;line-height:20px;white-space:pre;left:2px;">IST Programme</div></div>
<div style="position:absolute;left:502px;top:645px;width:28px;height:25px;overflow:hidden;color:#000;font-weight:normal;font-size:8.4px;letter-spacing:0px;"><div style="position:absolute;top:10px;line-height:20px;white-space:pre;right:0px;">0</div></div>
<div style="position:absolute;left:531px;top:645px;width:22px;height:25px;overflow:hidden;color:#000;font-weight:normal;font-size:8.4px;letter-spacing:0px;"><div style="position:absolute;top:10px;line-height:20px;white-space:pre;right:0px;">1</div></div>
<div style="position:absolute;left:554px;top:645px;width:52px;height:25px;overflow:hidden;color:#000;font-weight:normal;font-size:8.4px;letter-spacing:0px;"><div style="position:absolute;top:10px;line-height:20px;white-space:pre;right:0px;">1</div></div>
<div style="position:absolute;left:607px;top:645px;width:58px;height:25px;overflow:hidden;color:#000;font-weight:normal;font-size:8.4px;letter-spacing:0px;"><div style="position:absolute;top:10px;line-height:20px;white-space:pre;right:1px;">3</div></div>
<div style="position:absolute;left:666px;top:645px;width:47px;height:25px;overflow:hidden;color:#000;font-weight:normal;font-size:8.4px;letter-spacing:0px;"><div style="position:absolute;top:9px;line-height:20px;white-space:pre;right:1px;">6</div></div>
<div style="position:absolute;left:354px;top:671px;width:32px;height:42px;overflow:hidden;color:#000;font-weight:normal;font-size:8.4px;letter-spacing:0.15px;"><div style="position:absolute;top:27px;line-height:20px;white-space:pre;right:1px;">2003</div></div>
<div style="position:absolute;left:387px;top:671px;width:86px;height:42px;overflow:hidden;color:#000;font-weight:normal;font-size:8.3px;letter-spacing:0.15px;-webkit-text-stroke:0.1px #000;"><div style="position:absolute;top:27px;line-height:20px;white-space:pre;left:2px;">IST Programme</div></div>
<div style="position:absolute;left:502px;top:671px;width:28px;height:42px;overflow:hidden;color:#000;font-weight:normal;font-size:8.4px;letter-spacing:0px;"><div style="position:absolute;top:27px;line-height:20px;white-space:pre;right:0px;">0</div></div>
<div style="position:absolute;left:531px;top:671px;width:22px;height:42px;overflow:hidden;color:#000;font-weight:normal;font-size:8.4px;letter-spacing:0px;"><div style="position:absolute;top:27px;line-height:20px;white-space:pre;right:0px;">1</div></div>
<div style="position:absolute;left:554px;top:671px;width:52px;height:42px;overflow:hidden;color:#000;font-weight:normal;font-size:8.4px;letter-spacing:0px;"><div style="position:absolute;top:27px;line-height:20px;white-space:pre;right:0px;">1</div></div>
<div style="position:absolute;left:607px;top:671px;width:58px;height:42px;overflow:hidden;color:#000;font-weight:normal;font-size:8.4px;letter-spacing:0px;"><div style="position:absolute;top:27px;line-height:20px;white-space:pre;right:1px;">3</div></div>
<div style="position:absolute;left:666px;top:671px;width:47px;height:42px;overflow:hidden;color:#000;font-weight:normal;font-size:8.4px;letter-spacing:0px;"><div style="position:absolute;top:26px;line-height:20px;white-space:pre;right:1px;">6</div></div>
<div style="position:absolute;left:714px;top:645px;width:292px;height:25px;overflow:hidden;color:#000;font-weight:normal;font-size:7.5px;letter-spacing:0.02px;-webkit-text-stroke:0.15px #000;"><div style="position:absolute;top:-5px;line-height:20px;white-space:pre;left:2px;">The Internet has increased the volume of environmental information that can be collected</div><div style="position:absolute;top:4px;line-height:20px;white-space:pre;left:2px;">Access to modern technology enables people to obtain information online whenever necessary</div><div style="position:absolute;top:12px;line-height:20px;white-space:pre;left:2px;">the particular needs of each individual user.</div></div>
<div style="position:absolute;left:714px;top:671px;width:292px;height:42px;overflow:hidden;color:#000;font-weight:normal;font-size:7.5px;letter-spacing:0.02px;-webkit-text-stroke:0.15px #000;"><div style="position:absolute;top:-6px;line-height:20px;white-space:pre;left:2px;">Long-term economic growth, driven by increasing productivity, globalisation and enlargement</div><div style="position:absolute;top:3px;line-height:20px;white-space:pre;left:2px;">passenger traffic and freight traffic across the whole of Europe (see Figure 1). Although particular</div><div style="position:absolute;top:12px;line-height:20px;white-space:pre;left:2px;">15 population grew by only 10% over the same period. Similarly, the 117% growth in freight</div><div style="position:absolute;top:20px;line-height:20px;white-space:pre;left:2px;">industrial production and GDP during the 1990s. The long-term demand for mobility in the</div><div style="position:absolute;top:29px;line-height:20px;white-space:pre;left:2px;">incomes, higher rates of car ownership and the just-in-time, highfrequency logistics of a knowledge</div></div>
<div style="position:absolute;left:714px;top:714px;width:292px;height:17px;overflow:hidden;color:#000;font-weight:normal;font-size:7.5px;letter-spacing:0.02px;-webkit-text-stroke:0.15px #000;"><div style="position:absolute;top:-6px;line-height:20px;white-space:pre;left:2px;">This section discusses the general statistics for tourism in the EU, and emerging trends in the</div><div style="position:absolute;top:3px;line-height:20px;white-space:pre;left:2px;">the impact of the eEurope initiative on the tourism sector, and the challenges faced by</div></div>
<div style="position:absolute;left:222px;top:331px;width:133px;height:1px;background:#333;"></div>
<div style="position:absolute;left:222px;top:397px;width:133px;height:1px;background:#333;"></div>
<div style="position:absolute;left:222px;top:331px;width:1px;height:67px;background:#333;"></div>
<div style="position:absolute;left:354px;top:331px;width:1px;height:67px;background:#333;"></div>
<div style="position:absolute;left:223px;top:332px;width:131px;height:1px;background:#fff;"></div>
<div style="position:absolute;left:223px;top:396px;width:131px;height:1px;background:#fff;"></div>
<div style="position:absolute;left:223px;top:332px;width:1px;height:65px;background:#fff;"></div>
<div style="position:absolute;left:353px;top:332px;width:1px;height:65px;background:#fff;"></div>
<div style="position:absolute;left:224px;top:333px;width:129px;height:1px;background:#333;"></div>
<div style="position:absolute;left:224px;top:395px;width:129px;height:1px;background:#333;"></div>
<div style="position:absolute;left:224px;top:333px;width:1px;height:63px;background:#333;"></div>
<div style="position:absolute;left:352px;top:333px;width:1px;height:63px;background:#333;"></div>
<div style="position:absolute;left:351px;top:394px;width:5px;height:5px;background:#222;"></div>
<div style="position:absolute;left:353px;top:394px;width:1px;height:5px;background:#fff;"></div>
<div style="position:absolute;left:351px;top:396px;width:5px;height:1px;background:#fff;"></div>
<div style="position:absolute;left:1006px;top:95px;width:16px;height:636px;background:linear-gradient(to right,#EAEAF0,#F8F8FB 50%,#F2F2F6);"></div>
<div style="position:absolute;left:1022px;top:93px;width:2px;height:655px;background:#F4F4F8;"></div>
<div style="position:absolute;left:1007px;top:95px;width:15px;height:16px;background:linear-gradient(135deg,#FFFFFF,#E4E4EE 50%,#C8C8D8);border:1px solid #B8B8CC;border-radius:2px;"></div>
<svg style="position:absolute;left:1010px;top:99px" width="10" height="8" viewBox="0 0 10 8"><path d="M1 6 L5 2 L9 6" fill="none" stroke="#222" stroke-width="2"/></svg>
<div style="position:absolute;left:1007px;top:715px;width:15px;height:16px;background:linear-gradient(135deg,#FFFFFF,#E4E4EE 50%,#C8C8D8);border:1px solid #B8B8CC;border-radius:2px;"></div>
<svg style="position:absolute;left:1010px;top:719px" width="10" height="8" viewBox="0 0 10 8"><path d="M1 2 L5 6 L9 2" fill="none" stroke="#222" stroke-width="2"/></svg>
<div style="position:absolute;left:1007px;top:509px;width:15px;height:59px;background:linear-gradient(to right,#F4F4F8,#D8D8E4 60%,#C4C4D4);border:1px solid #A8A8C0;border-radius:2px;"></div>
<svg style="position:absolute;left:1011px;top:534px" width="8" height="8" viewBox="0 0 8 8"><rect x="0" y="0" width="7" height="1" fill="#8C8CA8"/><rect x="0" y="2" width="7" height="1" fill="#8C8CA8"/><rect x="0" y="4" width="7" height="1" fill="#8C8CA8"/><rect x="0" y="6" width="7" height="1" fill="#8C8CA8"/></svg>
<div style="position:absolute;left:2px;top:731px;width:1004px;height:17px;background:#E0E0E8;"></div>
<div style="position:absolute;left:0px;top:731px;width:1024px;height:1px;background:#F0F0F4;"></div>
<svg style="position:absolute;left:0px;top:731px" width="64" height="16" viewBox="0 0 64 16"><rect x="5" y="5" width="1.6" height="8" fill="#000"/><path d="M11 5 L7 9 L11 13 Z" fill="#000"/><path d="M27 5 L23 9 L27 13 Z" fill="#000"/><path d="M39 5 L43 9 L39 13 Z" fill="#000"/><path d="M55 5 L59 9 L55 13 Z" fill="#000"/><rect x="59.5" y="5" width="1.6" height="8" fill="#000"/></svg>
<div style="position:absolute;left:65px;top:731px;width:1px;height:16px;background:#A0A0B0;"></div>
<svg style="position:absolute;left:64px;top:731px" width="70" height="17" viewBox="0 0 70 17"><path d="M1.5 0 L9 15.5 H58.5 L66 0 Z" fill="#fff" stroke="#000" stroke-width="1"/></svg>
<div style="position:absolute;top:730px;font-size:13.2px;line-height:20px;color:#000;font-weight:normal;white-space:pre;letter-spacing:0.35px;left:76px;-webkit-text-stroke:0.45px #000;">Sheet1</div>
<div style="position:absolute;left:606px;top:731px;width:4px;height:16px;background:#C8C8D4;"></div>
<div style="position:absolute;left:609px;top:731px;width:2px;height:16px;background:#303030;"></div>
<div style="position:absolute;left:611px;top:732px;width:395px;height:15px;background:linear-gradient(to bottom,#EAEAF0,#F8F8FB 50%,#F2F2F6);"></div>
<div style="position:absolute;left:611px;top:732px;width:16px;height:15px;background:linear-gradient(135deg,#FFFFFF,#E4E4EE 50%,#C8C8D8);border:1px solid #B8B8CC;border-radius:2px;"></div>
<svg style="position:absolute;left:615px;top:735px" width="8" height="10" viewBox="0 0 8 10"><path d="M6 1 L2 5 L6 9" fill="none" stroke="#222" stroke-width="2"/></svg>
<div style="position:absolute;left:990px;top:732px;width:16px;height:15px;background:linear-gradient(135deg,#FFFFFF,#E4E4EE 50%,#C8C8D8);border:1px solid #B8B8CC;border-radius:2px;"></div>
<svg style="position:absolute;left:994px;top:735px" width="8" height="10" viewBox="0 0 8 10"><path d="M2 1 L6 5 L2 9" fill="none" stroke="#222" stroke-width="2"/></svg>
<div style="position:absolute;left:655px;top:732px;width:250px;height:15px;background:linear-gradient(to bottom,#F8F8FC,#DCDCE8 60%,#C8C8D8);border:1px solid #A8A8C0;border-radius:2px;"></div>
<svg style="position:absolute;left:775px;top:736px" width="8" height="8" viewBox="0 0 8 8"><rect x="0" y="0" width="1" height="7" fill="#8C8CA8"/><rect x="2" y="0" width="1" height="7" fill="#8C8CA8"/><rect x="4" y="0" width="1" height="7" fill="#8C8CA8"/><rect x="6" y="0" width="1" height="7" fill="#8C8CA8"/></svg>
<div style="position:absolute;left:1006px;top:731px;width:16px;height:17px;background:#DCDCE4;"></div>
<div style="position:absolute;left:0px;top:747px;width:1024px;height:1px;background:#D0D0DC;"></div>
<div style="position:absolute;left:0px;top:748px;width:1024px;height:2px;background:#FFFFFF;"></div>
<div style="position:absolute;left:0px;top:750px;width:1024px;height:16px;background:#E2E2EA;"></div>
<div style="position:absolute;left:0px;top:766px;width:1024px;height:2px;background:#C4C4D4;"></div>
<div style="position:absolute;top:750px;font-size:11px;line-height:20px;color:#000;font-weight:normal;white-space:pre;letter-spacing:0.25px;left:3.5px;">Ready</div>
<div style="position:absolute;left:713px;top:752px;width:34px;height:14px;border:1px solid #EEEEDC;"></div>
<div style="position:absolute;left:748px;top:752px;width:138px;height:14px;border:1px solid #EEEEDC;"></div>
<div style="position:absolute;left:887px;top:752px;width:30px;height:14px;border:1px solid #EEEEDC;"></div>
<div style="position:absolute;left:918px;top:752px;width:26px;height:14px;border:1px solid #EEEEDC;"></div>
<div style="position:absolute;left:945px;top:752px;width:29px;height:14px;border:1px solid #EEEEDC;"></div>
<div style="position:absolute;left:975px;top:752px;width:25px;height:14px;border:1px solid #EEEEDC;"></div>
<div style="position:absolute;left:1001px;top:752px;width:21px;height:14px;border:1px solid #EEEEDC;"></div>
<div style="position:absolute;top:750px;font-size:11px;line-height:20px;color:#000;font-weight:normal;white-space:pre;letter-spacing:0.3px;left:918px;">NUM</div>
</body></html>
